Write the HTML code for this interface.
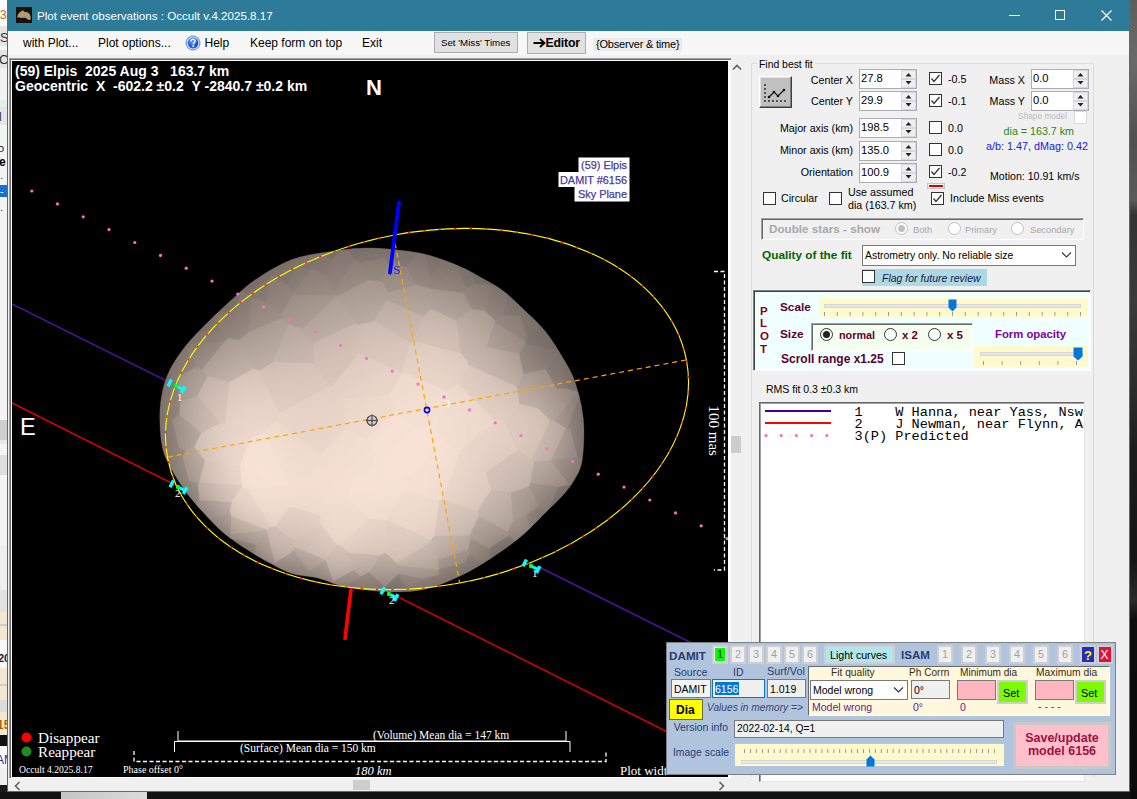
<!DOCTYPE html>
<html><head><meta charset="utf-8">
<style>
html,body{margin:0;padding:0;}
body{width:1137px;height:799px;overflow:hidden;position:relative;background:#1c1c1c;font-family:"Liberation Sans",sans-serif;font-size:12px;color:#000;}
.a{position:absolute;white-space:nowrap;}
.t{position:absolute;white-space:nowrap;line-height:1;}
.box{position:absolute;box-sizing:border-box;}
.btn{position:absolute;box-sizing:border-box;background:#e1e1e1;border:1px solid #adadad;}
</style></head><body>
<div class="box" style="left:0px;top:0px;width:8px;height:792px;background:#f4f4f4;"></div>
<div class="box" style="left:0px;top:0px;width:8px;height:26px;background:#fbfbfb;"></div>
<div class="t" style="left:0px;top:8.84px;font-size:12px;color:#d06010;letter-spacing:-1px;">3.</div>
<div class="box" style="left:0px;top:26px;width:8px;height:20px;background:#e4e4e4;"></div>
<div class="t" style="left:0px;top:31.00px;font-size:13px;color:#333;">S</div>
<div class="box" style="left:0px;top:46px;width:8px;height:4px;background:#f4f4f4;"></div>
<div class="box" style="left:0px;top:50px;width:8px;height:18px;background:#e4e4e4;"></div>
<div class="t" style="left:-1px;top:53.00px;font-size:13px;color:#333;">C</div>
<div class="box" style="left:0px;top:68px;width:8px;height:32px;background:#f2f2f2;"></div>
<div class="box" style="left:0px;top:100px;width:8px;height:7px;background:#e4f0e4;"></div>
<div class="box" style="left:0px;top:107px;width:8px;height:18px;background:#e6e6e6;"></div>
<div class="t" style="left:-1px;top:110.84px;font-size:12px;color:#333;">l</div>
<div class="box" style="left:0px;top:125px;width:8px;height:14px;background:#f2f6f0;"></div>
<div class="t" style="left:-2px;top:142.69px;font-size:11px;color:#222;">o</div>
<div class="t" style="left:-1px;top:155.84px;font-size:12px;color:#000;font-weight:bold;">e</div>
<div class="t" style="left:0px;top:169.69px;font-size:11px;color:#333;">.</div>
<div class="box" style="left:0px;top:185px;width:8px;height:12px;background:#1a6fd0;"></div>
<div class="t" style="left:0px;top:185.69px;font-size:11px;color:#fff;">-</div>
<div class="t" style="left:0px;top:201.69px;font-size:11px;color:#333;">.</div>
<div class="box" style="left:0px;top:212px;width:8px;height:268px;background:#f4f4f4;"></div>
<div class="box" style="left:0px;top:420px;width:8px;height:20px;background:#cfcfcf;"></div>
<div class="box" style="left:0px;top:440px;width:8px;height:4px;background:#e8e8e8;"></div>
<div class="box" style="left:0px;top:455px;width:8px;height:20px;background:#e0e0e0;"></div>
<div class="box" style="left:0px;top:545px;width:8px;height:45px;background:#eeeeee;"></div>
<div class="box" style="left:0px;top:590px;width:8px;height:22px;background:#e2e2e2;"></div>
<div class="box" style="left:0px;top:612px;width:8px;height:28px;background:#f2ead0;"></div>
<div class="box" style="left:0px;top:624px;width:8px;height:2px;background:#cfcfcf;"></div>
<div class="box" style="left:0px;top:640px;width:8px;height:28px;background:#f8f8f8;"></div>
<div class="t" style="left:-2px;top:652.69px;font-size:11px;color:#222;font-weight:bold;">20</div>
<div class="box" style="left:0px;top:668px;width:8px;height:32px;background:#f2ead0;"></div>
<div class="box" style="left:0px;top:684px;width:8px;height:2px;background:#cfcfcf;"></div>
<div class="box" style="left:0px;top:700px;width:8px;height:12px;background:#dcdcdc;"></div>
<div class="box" style="left:0px;top:712px;width:8px;height:23px;background:#f2ead0;"></div>
<div class="t" style="left:-3px;top:718.84px;font-size:12px;color:#b06000;font-weight:bold;">15</div>
<div class="box" style="left:0px;top:735px;width:8px;height:11px;background:#111;"></div>
<div class="box" style="left:0px;top:746px;width:8px;height:22px;background:#f8f8f8;"></div>
<div class="t" style="left:-4px;top:753.84px;font-size:12px;color:#3a2aa0;">AM</div>
<div class="box" style="left:0px;top:768px;width:8px;height:17px;background:#f0f0f0;"></div>
<div class="box" style="left:0px;top:785px;width:8px;height:7px;background:#1a1a1a;"></div>
<div class="box" style="left:0px;top:792px;width:1137px;height:7px;background:#121212;"></div>
<div class="box" style="left:61px;top:792px;width:86px;height:7px;background:linear-gradient(90deg,#c4c4c4,#dcdcdc);"></div>
<div class="box" style="left:1130px;top:0px;width:7px;height:799px;background:linear-gradient(180deg,#5e5e5e 0,#6a6a6a 60px,#505050 140px,#5a5a5a 200px,#333 215px,#3a3a3a 300px,#2a2a2a 400px,#1c1c1c 450px,#151515 560px,#2a2a2a 600px,#0c0c0c 620px,#0a0a0a 799px);"></div>
<div class="box" style="left:7px;top:0px;width:1123px;height:792px;background:#f0f0f0;border:1px solid #2d7b99;border-top:none;"></div>
<div class="box" style="left:7px;top:0px;width:1123px;height:31px;background:#2d7b99;"></div>
<div class="box" style="left:16px;top:7px;width:16px;height:16px;background:#15120e;"></div>
<svg class="a" style="left:16px;top:7px;" width="16" height="16"><path d="M1.2 9.4C2 7 3.5 5 5.5 4C7 3 7.8 3.4 8.2 4.8C9.5 5 11.5 5 12.5 6C14 7 14.8 9 14.7 11.5C14.6 13 13.5 13.5 12.5 12.8C11 11.8 9.5 10.6 8.5 10.8C6 11 3 11 1.6 10.6Z" fill="#b59a70"/></svg>
<div class="t" style="left:37px;top:10.38px;font-size:11.6px;color:#fff;">Plot event observations : Occult v.4.2025.8.17</div>
<div class="box" style="left:1009px;top:15px;width:11px;height:1px;background:#fff;"></div>
<div class="box" style="left:1055px;top:10px;width:10px;height:10px;border:1px solid #fff;"></div>
<svg class="a" style="left:1101px;top:10px;" width="11" height="11"><path d="M0.5 0.5L10.5 10.5M10.5 0.5L0.5 10.5" stroke="#fff" stroke-width="1.15"/></svg>
<div class="box" style="left:8px;top:31px;width:1121px;height:24px;background:#f7f7f7;"></div>
<div class="t" style="left:23px;top:36.64px;font-size:12px;color:#000;">with Plot...</div>
<div class="t" style="left:98px;top:36.64px;font-size:12px;color:#000;">Plot options...</div>
<svg class="a" style="left:185px;top:35px;" width="16" height="16"><defs><radialGradient id="hg" cx="0.4" cy="0.35" r="0.7"><stop offset="0" stop-color="#5a9cff"/><stop offset="1" stop-color="#0a3cc0"/></radialGradient></defs><circle cx="8" cy="8" r="7" fill="#dfe8f8" stroke="#4a78d0" stroke-width="0.9"/><circle cx="8" cy="8" r="5.4" fill="url(#hg)"/><path d="M6 6.3C6 4.9 7 4.3 8.1 4.3C9.3 4.3 10.1 5.1 10.1 6.1C10.1 7.3 8.6 7.6 8.4 8.8V9.4" fill="none" stroke="#fff" stroke-width="1.5"/><circle cx="8.3" cy="11.3" r="0.95" fill="#fff"/></svg>
<div class="t" style="left:204.5px;top:36.64px;font-size:12px;color:#000;">Help</div>
<div class="t" style="left:250px;top:36.64px;font-size:12px;color:#000;">Keep form on top</div>
<div class="t" style="left:362px;top:36.64px;font-size:12px;color:#000;">Exit</div>
<div class="box" style="left:434px;top:32px;width:84px;height:21px;background:#e1e1e1;border:1px solid #adadad;"></div>
<div class="t" style="left:441px;top:37.99px;font-size:9.7px;color:#000;">Set 'Miss' Times</div>
<div class="box" style="left:527px;top:32px;width:59px;height:22px;background:#e1e1e1;border:1px solid #adadad;"></div>
<svg class="a" style="left:533px;top:37px;" width="14" height="12"><path d="M0.5 6H11M7 2L11.5 6L7 10" fill="none" stroke="#000" stroke-width="1.8"/></svg>
<div class="t" style="left:545.5px;top:37.39px;font-size:12.3px;color:#000;font-weight:bold;letter-spacing:-0.2px;">Editor</div>
<div class="box" style="left:593px;top:38px;width:89px;height:13px;background:#ebebeb;"></div>
<div class="t" style="left:596px;top:39.19px;font-size:11px;color:#000;letter-spacing:-0.2px;">{Observer &amp; time}</div>
<div class="box" style="left:9px;top:58px;width:722px;height:720px;background:#fff;border-left:1px solid #a0a0a0;border-top:1px solid #a0a0a0;"></div>
<div class="box" style="left:10px;top:59px;width:721px;height:719px;background:#fff;border-left:1px solid #696969;border-top:1px solid #696969;"></div>
<svg class="a" style="left:12px;top:61px;" width="716" height="716" viewBox="12 61 716 716">
<rect x="12" y="61" width="716" height="716" fill="#000"/>
<line x1="12" y1="304" x2="175" y2="385.2" stroke="#5510a0" stroke-width="1.4"/>
<line x1="537" y1="566" x2="728" y2="661" stroke="#5510a0" stroke-width="1.4"/>
<line x1="12" y1="403" x2="178" y2="486.3" stroke="#e80000" stroke-width="1.4"/>
<line x1="392" y1="593.8" x2="728" y2="762.4" stroke="#e80000" stroke-width="1.4"/>
<defs><clipPath id="astclip"><path d="M160.0 425.0 L159.9 420.0 L159.8 415.0 L160.0 410.0 L160.4 405.0 L161.0 400.0 L161.8 395.0 L162.8 390.0 L164.0 385.0 L165.6 380.0 L167.5 375.0 L169.8 370.0 L172.5 365.0 L175.6 360.0 L178.9 355.0 L182.5 350.0 L186.4 345.0 L190.7 340.0 L195.3 335.1 L200.1 330.1 L205.0 325.0 L210.3 319.8 L215.9 314.3 L221.6 308.9 L227.2 303.8 L232.5 299.0 L237.1 294.8 L241.2 291.0 L245.2 287.4 L249.7 283.8 L255.0 280.0 L261.4 275.8 L268.5 271.3 L276.1 266.9 L284.0 262.9 L292.0 259.5 L300.2 256.9 L308.9 255.0 L317.7 253.4 L326.2 252.2 L334.0 251.0 L341.0 250.0 L347.5 249.2 L353.7 248.6 L359.8 248.2 L366.0 248.0 L372.4 248.0 L378.8 248.3 L385.3 248.7 L391.7 249.3 L398.0 250.0 L404.2 250.7 L410.4 251.6 L416.6 252.6 L422.8 253.8 L429.0 255.3 L435.5 257.2 L442.3 259.6 L449.0 262.1 L455.4 264.6 L461.0 267.0 L465.7 269.1 L469.8 271.2 L473.5 273.2 L477.1 275.3 L481.0 277.5 L485.2 279.8 L489.5 282.2 L493.9 284.7 L498.3 287.4 L502.6 290.4 L506.9 293.8 L511.1 297.5 L515.3 301.5 L519.6 305.5 L523.8 309.6 L528.1 313.7 L532.5 317.8 L536.8 322.0 L541.0 326.4 L545.0 331.0 L548.7 335.8 L552.3 340.9 L555.7 346.0 L558.9 351.2 L562.0 356.4 L564.9 361.3 L567.7 366.0 L570.3 370.9 L572.8 376.1 L575.0 382.0 L577.1 388.8 L579.2 396.2 L581.0 404.1 L582.4 412.1 L583.4 420.0 L583.9 428.2 L583.9 436.8 L583.6 445.3 L583.0 453.2 L582.2 460.0 L581.1 465.3 L579.7 469.6 L578.0 473.2 L576.2 476.6 L574.2 480.0 L572.1 483.5 L569.9 486.7 L567.5 489.8 L564.9 492.9 L562.2 496.0 L559.3 499.1 L556.2 502.2 L553.0 505.3 L549.6 508.5 L546.1 512.0 L542.3 515.8 L538.3 519.9 L534.2 524.1 L530.1 528.2 L526.0 532.0 L522.1 535.5 L518.2 538.7 L514.3 541.8 L510.3 544.9 L506.0 548.0 L501.4 551.3 L496.6 554.6 L491.6 557.9 L486.7 561.1 L482.0 564.0 L477.6 566.7 L473.4 569.1 L469.3 571.4 L464.9 573.7 L460.0 576.0 L454.5 578.5 L448.4 581.2 L442.1 583.8 L435.9 586.1 L430.0 588.0 L424.6 589.3 L419.5 590.3 L414.4 590.9 L409.3 591.4 L403.8 591.7 L397.9 591.9 L391.8 591.9 L385.6 591.7 L379.2 591.3 L373.0 590.8 L366.7 590.1 L360.3 589.3 L353.9 588.3 L347.8 587.2 L342.0 586.0 L336.8 584.5 L332.0 582.9 L327.4 581.1 L322.8 579.4 L318.0 578.0 L312.9 577.0 L307.6 576.3 L302.4 575.6 L297.1 574.8 L292.0 573.5 L287.1 571.7 L282.3 569.6 L277.6 567.2 L272.8 564.6 L268.0 562.0 L263.0 559.2 L257.9 556.3 L252.8 553.2 L247.8 550.1 L243.0 547.0 L238.5 544.0 L234.3 541.1 L230.1 538.1 L226.1 534.9 L222.0 531.5 L217.9 527.7 L213.7 523.6 L209.7 519.3 L205.7 515.1 L202.0 511.0 L198.5 507.2 L195.2 503.4 L192.1 499.7 L189.0 496.0 L186.0 492.0 L183.0 487.8 L180.0 483.3 L177.1 478.8 L174.4 474.3 L172.0 470.0 L169.8 466.0 L167.8 462.1 L165.9 458.3 L164.3 454.3 L163.0 450.0 L162.0 445.3 L161.2 440.4 L160.6 435.2 L160.2 430.1Z"/></clipPath><filter id="blur" x="-5%" y="-5%" width="110%" height="110%"><feGaussianBlur stdDeviation="7"/></filter></defs><g clip-path="url(#astclip)"><g filter="url(#blur)"><rect x="148" y="236" width="12" height="12" fill="#645c56"/><rect x="160" y="236" width="12" height="12" fill="#645c56"/><rect x="172" y="236" width="12" height="12" fill="#645c56"/><rect x="184" y="236" width="12" height="12" fill="#645c56"/><rect x="196" y="236" width="12" height="12" fill="#645c56"/><rect x="208" y="236" width="12" height="12" fill="#645c56"/><rect x="220" y="236" width="12" height="12" fill="#645c56"/><rect x="232" y="236" width="12" height="12" fill="#645c56"/><rect x="244" y="236" width="12" height="12" fill="#645c56"/><rect x="256" y="236" width="12" height="12" fill="#645c56"/><rect x="268" y="236" width="12" height="12" fill="#645c56"/><rect x="280" y="236" width="12" height="12" fill="#655c57"/><rect x="292" y="236" width="12" height="12" fill="#685f5a"/><rect x="304" y="236" width="12" height="12" fill="#6b625c"/><rect x="316" y="236" width="12" height="12" fill="#6c635d"/><rect x="328" y="236" width="12" height="12" fill="#6e645f"/><rect x="340" y="236" width="12" height="12" fill="#6f655f"/><rect x="352" y="236" width="12" height="12" fill="#6f6660"/><rect x="364" y="236" width="12" height="12" fill="#706660"/><rect x="376" y="236" width="12" height="12" fill="#6f6660"/><rect x="388" y="236" width="12" height="12" fill="#6e655f"/><rect x="400" y="236" width="12" height="12" fill="#6c635d"/><rect x="412" y="236" width="12" height="12" fill="#6a615b"/><rect x="424" y="236" width="12" height="12" fill="#675f59"/><rect x="436" y="236" width="12" height="12" fill="#645c56"/><rect x="448" y="236" width="12" height="12" fill="#645c56"/><rect x="460" y="236" width="12" height="12" fill="#645c56"/><rect x="472" y="236" width="12" height="12" fill="#645c56"/><rect x="484" y="236" width="12" height="12" fill="#645c56"/><rect x="496" y="236" width="12" height="12" fill="#645c56"/><rect x="508" y="236" width="12" height="12" fill="#645c56"/><rect x="520" y="236" width="12" height="12" fill="#645c56"/><rect x="532" y="236" width="12" height="12" fill="#645c56"/><rect x="544" y="236" width="12" height="12" fill="#645c56"/><rect x="556" y="236" width="12" height="12" fill="#645c56"/><rect x="568" y="236" width="12" height="12" fill="#645c56"/><rect x="580" y="236" width="12" height="12" fill="#645c56"/><rect x="592" y="236" width="12" height="12" fill="#645c56"/><rect x="148" y="248" width="12" height="12" fill="#645c56"/><rect x="160" y="248" width="12" height="12" fill="#645c56"/><rect x="172" y="248" width="12" height="12" fill="#645c56"/><rect x="184" y="248" width="12" height="12" fill="#645c56"/><rect x="196" y="248" width="12" height="12" fill="#645c56"/><rect x="208" y="248" width="12" height="12" fill="#645c56"/><rect x="220" y="248" width="12" height="12" fill="#645c56"/><rect x="232" y="248" width="12" height="12" fill="#645c56"/><rect x="244" y="248" width="12" height="12" fill="#645c56"/><rect x="256" y="248" width="12" height="12" fill="#655d57"/><rect x="268" y="248" width="12" height="12" fill="#6b625c"/><rect x="280" y="248" width="12" height="12" fill="#6f6660"/><rect x="292" y="248" width="12" height="12" fill="#736963"/><rect x="304" y="248" width="12" height="12" fill="#756b65"/><rect x="316" y="248" width="12" height="12" fill="#776d67"/><rect x="328" y="248" width="12" height="12" fill="#796f68"/><rect x="340" y="248" width="12" height="12" fill="#7b706a"/><rect x="352" y="248" width="12" height="12" fill="#7c716b"/><rect x="364" y="248" width="12" height="12" fill="#7d726c"/><rect x="376" y="248" width="12" height="12" fill="#7d736c"/><rect x="388" y="248" width="12" height="12" fill="#7c716b"/><rect x="400" y="248" width="12" height="12" fill="#7a6f69"/><rect x="412" y="248" width="12" height="12" fill="#776d67"/><rect x="424" y="248" width="12" height="12" fill="#746a64"/><rect x="436" y="248" width="12" height="12" fill="#706761"/><rect x="448" y="248" width="12" height="12" fill="#6b625d"/><rect x="460" y="248" width="12" height="12" fill="#665e58"/><rect x="472" y="248" width="12" height="12" fill="#645c56"/><rect x="484" y="248" width="12" height="12" fill="#645c56"/><rect x="496" y="248" width="12" height="12" fill="#645c56"/><rect x="508" y="248" width="12" height="12" fill="#645c56"/><rect x="520" y="248" width="12" height="12" fill="#645c56"/><rect x="532" y="248" width="12" height="12" fill="#645c56"/><rect x="544" y="248" width="12" height="12" fill="#645c56"/><rect x="556" y="248" width="12" height="12" fill="#645c56"/><rect x="568" y="248" width="12" height="12" fill="#645c56"/><rect x="580" y="248" width="12" height="12" fill="#645c56"/><rect x="592" y="248" width="12" height="12" fill="#645c56"/><rect x="148" y="260" width="12" height="12" fill="#645c56"/><rect x="160" y="260" width="12" height="12" fill="#645c56"/><rect x="172" y="260" width="12" height="12" fill="#645c56"/><rect x="184" y="260" width="12" height="12" fill="#645c56"/><rect x="196" y="260" width="12" height="12" fill="#645c56"/><rect x="208" y="260" width="12" height="12" fill="#645c56"/><rect x="220" y="260" width="12" height="12" fill="#645c56"/><rect x="232" y="260" width="12" height="12" fill="#645c56"/><rect x="244" y="260" width="12" height="12" fill="#685f5a"/><rect x="256" y="260" width="12" height="12" fill="#6f6560"/><rect x="268" y="260" width="12" height="12" fill="#746b64"/><rect x="280" y="260" width="12" height="12" fill="#796f68"/><rect x="292" y="260" width="12" height="12" fill="#7d726c"/><rect x="304" y="260" width="12" height="12" fill="#80756e"/><rect x="316" y="260" width="12" height="12" fill="#837871"/><rect x="328" y="260" width="12" height="12" fill="#857a73"/><rect x="340" y="260" width="12" height="12" fill="#877c74"/><rect x="352" y="260" width="12" height="12" fill="#897d76"/><rect x="364" y="260" width="12" height="12" fill="#8b7f77"/><rect x="376" y="260" width="12" height="12" fill="#8c8078"/><rect x="388" y="260" width="12" height="12" fill="#8a7f77"/><rect x="400" y="260" width="12" height="12" fill="#887d75"/><rect x="412" y="260" width="12" height="12" fill="#867a73"/><rect x="424" y="260" width="12" height="12" fill="#827770"/><rect x="436" y="260" width="12" height="12" fill="#7e736c"/><rect x="448" y="260" width="12" height="12" fill="#786e68"/><rect x="460" y="260" width="12" height="12" fill="#726963"/><rect x="472" y="260" width="12" height="12" fill="#6c635d"/><rect x="484" y="260" width="12" height="12" fill="#665d58"/><rect x="496" y="260" width="12" height="12" fill="#645c56"/><rect x="508" y="260" width="12" height="12" fill="#645c56"/><rect x="520" y="260" width="12" height="12" fill="#645c56"/><rect x="532" y="260" width="12" height="12" fill="#645c56"/><rect x="544" y="260" width="12" height="12" fill="#645c56"/><rect x="556" y="260" width="12" height="12" fill="#645c56"/><rect x="568" y="260" width="12" height="12" fill="#645c56"/><rect x="580" y="260" width="12" height="12" fill="#645c56"/><rect x="592" y="260" width="12" height="12" fill="#645c56"/><rect x="148" y="272" width="12" height="12" fill="#645c56"/><rect x="160" y="272" width="12" height="12" fill="#645c56"/><rect x="172" y="272" width="12" height="12" fill="#645c56"/><rect x="184" y="272" width="12" height="12" fill="#645c56"/><rect x="196" y="272" width="12" height="12" fill="#645c56"/><rect x="208" y="272" width="12" height="12" fill="#645c56"/><rect x="220" y="272" width="12" height="12" fill="#645c56"/><rect x="232" y="272" width="12" height="12" fill="#6a615b"/><rect x="244" y="272" width="12" height="12" fill="#726862"/><rect x="256" y="272" width="12" height="12" fill="#786e68"/><rect x="268" y="272" width="12" height="12" fill="#7e736d"/><rect x="280" y="272" width="12" height="12" fill="#837871"/><rect x="292" y="272" width="12" height="12" fill="#877c75"/><rect x="304" y="272" width="12" height="12" fill="#8b7f78"/><rect x="316" y="272" width="12" height="12" fill="#8e827a"/><rect x="328" y="272" width="12" height="12" fill="#91857d"/><rect x="340" y="272" width="12" height="12" fill="#93877f"/><rect x="352" y="272" width="12" height="12" fill="#968981"/><rect x="364" y="272" width="12" height="12" fill="#988b83"/><rect x="376" y="272" width="12" height="12" fill="#998c84"/><rect x="388" y="272" width="12" height="12" fill="#988b83"/><rect x="400" y="272" width="12" height="12" fill="#978a82"/><rect x="412" y="272" width="12" height="12" fill="#948880"/><rect x="424" y="272" width="12" height="12" fill="#91857d"/><rect x="436" y="272" width="12" height="12" fill="#8c8079"/><rect x="448" y="272" width="12" height="12" fill="#877b74"/><rect x="460" y="272" width="12" height="12" fill="#80756e"/><rect x="472" y="272" width="12" height="12" fill="#796f68"/><rect x="484" y="272" width="12" height="12" fill="#716862"/><rect x="496" y="272" width="12" height="12" fill="#6a615b"/><rect x="508" y="272" width="12" height="12" fill="#645c56"/><rect x="520" y="272" width="12" height="12" fill="#645c56"/><rect x="532" y="272" width="12" height="12" fill="#645c56"/><rect x="544" y="272" width="12" height="12" fill="#645c56"/><rect x="556" y="272" width="12" height="12" fill="#645c56"/><rect x="568" y="272" width="12" height="12" fill="#645c56"/><rect x="580" y="272" width="12" height="12" fill="#645c56"/><rect x="592" y="272" width="12" height="12" fill="#645c56"/><rect x="148" y="284" width="12" height="12" fill="#645c56"/><rect x="160" y="284" width="12" height="12" fill="#645c56"/><rect x="172" y="284" width="12" height="12" fill="#645c56"/><rect x="184" y="284" width="12" height="12" fill="#645c56"/><rect x="196" y="284" width="12" height="12" fill="#645c56"/><rect x="208" y="284" width="12" height="12" fill="#645c56"/><rect x="220" y="284" width="12" height="12" fill="#6a615b"/><rect x="232" y="284" width="12" height="12" fill="#736963"/><rect x="244" y="284" width="12" height="12" fill="#7b706a"/><rect x="256" y="284" width="12" height="12" fill="#827770"/><rect x="268" y="284" width="12" height="12" fill="#887c75"/><rect x="280" y="284" width="12" height="12" fill="#8d817a"/><rect x="292" y="284" width="12" height="12" fill="#92857e"/><rect x="304" y="284" width="12" height="12" fill="#968981"/><rect x="316" y="284" width="12" height="12" fill="#998c84"/><rect x="328" y="284" width="12" height="12" fill="#9c8f87"/><rect x="340" y="284" width="12" height="12" fill="#9f9289"/><rect x="352" y="284" width="12" height="12" fill="#a2948c"/><rect x="364" y="284" width="12" height="12" fill="#a4968d"/><rect x="376" y="284" width="12" height="12" fill="#a5978f"/><rect x="388" y="284" width="12" height="12" fill="#a6988f"/><rect x="400" y="284" width="12" height="12" fill="#a5978e"/><rect x="412" y="284" width="12" height="12" fill="#a3958d"/><rect x="424" y="284" width="12" height="12" fill="#a0938a"/><rect x="436" y="284" width="12" height="12" fill="#9c8f86"/><rect x="448" y="284" width="12" height="12" fill="#968981"/><rect x="460" y="284" width="12" height="12" fill="#8f837b"/><rect x="472" y="284" width="12" height="12" fill="#877b74"/><rect x="484" y="284" width="12" height="12" fill="#7e736d"/><rect x="496" y="284" width="12" height="12" fill="#756b65"/><rect x="508" y="284" width="12" height="12" fill="#6d645e"/><rect x="520" y="284" width="12" height="12" fill="#665d58"/><rect x="532" y="284" width="12" height="12" fill="#645c56"/><rect x="544" y="284" width="12" height="12" fill="#645c56"/><rect x="556" y="284" width="12" height="12" fill="#645c56"/><rect x="568" y="284" width="12" height="12" fill="#645c56"/><rect x="580" y="284" width="12" height="12" fill="#645c56"/><rect x="592" y="284" width="12" height="12" fill="#645c56"/><rect x="148" y="296" width="12" height="12" fill="#645c56"/><rect x="160" y="296" width="12" height="12" fill="#645c56"/><rect x="172" y="296" width="12" height="12" fill="#645c56"/><rect x="184" y="296" width="12" height="12" fill="#645c56"/><rect x="196" y="296" width="12" height="12" fill="#645c56"/><rect x="208" y="296" width="12" height="12" fill="#6a615b"/><rect x="220" y="296" width="12" height="12" fill="#746a64"/><rect x="232" y="296" width="12" height="12" fill="#7c726b"/><rect x="244" y="296" width="12" height="12" fill="#847972"/><rect x="256" y="296" width="12" height="12" fill="#8b7f78"/><rect x="268" y="296" width="12" height="12" fill="#92857e"/><rect x="280" y="296" width="12" height="12" fill="#978a82"/><rect x="292" y="296" width="12" height="12" fill="#9c8f86"/><rect x="304" y="296" width="12" height="12" fill="#a0938a"/><rect x="316" y="296" width="12" height="12" fill="#a4968d"/><rect x="328" y="296" width="12" height="12" fill="#a79990"/><rect x="340" y="296" width="12" height="12" fill="#ab9c93"/><rect x="352" y="296" width="12" height="12" fill="#ad9f96"/><rect x="364" y="296" width="12" height="12" fill="#b0a198"/><rect x="376" y="296" width="12" height="12" fill="#b2a399"/><rect x="388" y="296" width="12" height="12" fill="#b3a39a"/><rect x="400" y="296" width="12" height="12" fill="#b3a39a"/><rect x="412" y="296" width="12" height="12" fill="#b2a299"/><rect x="424" y="296" width="12" height="12" fill="#afa097"/><rect x="436" y="296" width="12" height="12" fill="#ab9d94"/><rect x="448" y="296" width="12" height="12" fill="#a6988f"/><rect x="460" y="296" width="12" height="12" fill="#9e9188"/><rect x="472" y="296" width="12" height="12" fill="#958880"/><rect x="484" y="296" width="12" height="12" fill="#8b8078"/><rect x="496" y="296" width="12" height="12" fill="#827670"/><rect x="508" y="296" width="12" height="12" fill="#786e67"/><rect x="520" y="296" width="12" height="12" fill="#706660"/><rect x="532" y="296" width="12" height="12" fill="#685f5a"/><rect x="544" y="296" width="12" height="12" fill="#645c56"/><rect x="556" y="296" width="12" height="12" fill="#645c56"/><rect x="568" y="296" width="12" height="12" fill="#645c56"/><rect x="580" y="296" width="12" height="12" fill="#645c56"/><rect x="592" y="296" width="12" height="12" fill="#645c56"/><rect x="148" y="308" width="12" height="12" fill="#645c56"/><rect x="160" y="308" width="12" height="12" fill="#645c56"/><rect x="172" y="308" width="12" height="12" fill="#645c56"/><rect x="184" y="308" width="12" height="12" fill="#645c56"/><rect x="196" y="308" width="12" height="12" fill="#69605b"/><rect x="208" y="308" width="12" height="12" fill="#746a64"/><rect x="220" y="308" width="12" height="12" fill="#7e736d"/><rect x="232" y="308" width="12" height="12" fill="#877c74"/><rect x="244" y="308" width="12" height="12" fill="#8f837b"/><rect x="256" y="308" width="12" height="12" fill="#968981"/><rect x="268" y="308" width="12" height="12" fill="#9c8f87"/><rect x="280" y="308" width="12" height="12" fill="#a1948b"/><rect x="292" y="308" width="12" height="12" fill="#a6988f"/><rect x="304" y="308" width="12" height="12" fill="#aa9c93"/><rect x="316" y="308" width="12" height="12" fill="#aea096"/><rect x="328" y="308" width="12" height="12" fill="#b2a399"/><rect x="340" y="308" width="12" height="12" fill="#b5a69c"/><rect x="352" y="308" width="12" height="12" fill="#b8a99f"/><rect x="364" y="308" width="12" height="12" fill="#bbaba1"/><rect x="376" y="308" width="12" height="12" fill="#bdada3"/><rect x="388" y="308" width="12" height="12" fill="#bfaea4"/><rect x="400" y="308" width="12" height="12" fill="#bfafa5"/><rect x="412" y="308" width="12" height="12" fill="#bfafa5"/><rect x="424" y="308" width="12" height="12" fill="#beaea4"/><rect x="436" y="308" width="12" height="12" fill="#bbaba1"/><rect x="448" y="308" width="12" height="12" fill="#b5a69c"/><rect x="460" y="308" width="12" height="12" fill="#ad9e95"/><rect x="472" y="308" width="12" height="12" fill="#a3968d"/><rect x="484" y="308" width="12" height="12" fill="#998c84"/><rect x="496" y="308" width="12" height="12" fill="#8e827b"/><rect x="508" y="308" width="12" height="12" fill="#847972"/><rect x="520" y="308" width="12" height="12" fill="#7a7069"/><rect x="532" y="308" width="12" height="12" fill="#716761"/><rect x="544" y="308" width="12" height="12" fill="#685f5a"/><rect x="556" y="308" width="12" height="12" fill="#645c56"/><rect x="568" y="308" width="12" height="12" fill="#645c56"/><rect x="580" y="308" width="12" height="12" fill="#645c56"/><rect x="592" y="308" width="12" height="12" fill="#645c56"/><rect x="148" y="320" width="12" height="12" fill="#645c56"/><rect x="160" y="320" width="12" height="12" fill="#645c56"/><rect x="172" y="320" width="12" height="12" fill="#645c56"/><rect x="184" y="320" width="12" height="12" fill="#685f59"/><rect x="196" y="320" width="12" height="12" fill="#746a64"/><rect x="208" y="320" width="12" height="12" fill="#80756e"/><rect x="220" y="320" width="12" height="12" fill="#8a7e77"/><rect x="232" y="320" width="12" height="12" fill="#93867f"/><rect x="244" y="320" width="12" height="12" fill="#9b8d85"/><rect x="256" y="320" width="12" height="12" fill="#a1938b"/><rect x="268" y="320" width="12" height="12" fill="#a79990"/><rect x="280" y="320" width="12" height="12" fill="#ac9d94"/><rect x="292" y="320" width="12" height="12" fill="#b0a198"/><rect x="304" y="320" width="12" height="12" fill="#b4a59c"/><rect x="316" y="320" width="12" height="12" fill="#b8a99f"/><rect x="328" y="320" width="12" height="12" fill="#bcaca2"/><rect x="340" y="320" width="12" height="12" fill="#bfafa5"/><rect x="352" y="320" width="12" height="12" fill="#c2b2a7"/><rect x="364" y="320" width="12" height="12" fill="#c5b4aa"/><rect x="376" y="320" width="12" height="12" fill="#c7b6ac"/><rect x="388" y="320" width="12" height="12" fill="#c9b8ae"/><rect x="400" y="320" width="12" height="12" fill="#cbb9af"/><rect x="412" y="320" width="12" height="12" fill="#cbbaaf"/><rect x="424" y="320" width="12" height="12" fill="#cbbaaf"/><rect x="436" y="320" width="12" height="12" fill="#c9b8ad"/><rect x="448" y="320" width="12" height="12" fill="#c4b3a9"/><rect x="460" y="320" width="12" height="12" fill="#bbaba1"/><rect x="472" y="320" width="12" height="12" fill="#b1a298"/><rect x="484" y="320" width="12" height="12" fill="#a6978f"/><rect x="496" y="320" width="12" height="12" fill="#9a8d85"/><rect x="508" y="320" width="12" height="12" fill="#8e827b"/><rect x="520" y="320" width="12" height="12" fill="#827770"/><rect x="532" y="320" width="12" height="12" fill="#776d67"/><rect x="544" y="320" width="12" height="12" fill="#6e645f"/><rect x="556" y="320" width="12" height="12" fill="#675e58"/><rect x="568" y="320" width="12" height="12" fill="#645c56"/><rect x="580" y="320" width="12" height="12" fill="#645c56"/><rect x="592" y="320" width="12" height="12" fill="#645c56"/><rect x="148" y="332" width="12" height="12" fill="#645c56"/><rect x="160" y="332" width="12" height="12" fill="#645c56"/><rect x="172" y="332" width="12" height="12" fill="#645c57"/><rect x="184" y="332" width="12" height="12" fill="#736963"/><rect x="196" y="332" width="12" height="12" fill="#81766f"/><rect x="208" y="332" width="12" height="12" fill="#8d817a"/><rect x="220" y="332" width="12" height="12" fill="#978b83"/><rect x="232" y="332" width="12" height="12" fill="#a0928a"/><rect x="244" y="332" width="12" height="12" fill="#a79990"/><rect x="256" y="332" width="12" height="12" fill="#ad9e95"/><rect x="268" y="332" width="12" height="12" fill="#b2a399"/><rect x="280" y="332" width="12" height="12" fill="#b6a79d"/><rect x="292" y="332" width="12" height="12" fill="#baaba1"/><rect x="304" y="332" width="12" height="12" fill="#beaea4"/><rect x="316" y="332" width="12" height="12" fill="#c2b1a7"/><rect x="328" y="332" width="12" height="12" fill="#c5b4aa"/><rect x="340" y="332" width="12" height="12" fill="#c8b7ad"/><rect x="352" y="332" width="12" height="12" fill="#cbbaaf"/><rect x="364" y="332" width="12" height="12" fill="#cebdb2"/><rect x="376" y="332" width="12" height="12" fill="#d1bfb4"/><rect x="388" y="332" width="12" height="12" fill="#d3c1b6"/><rect x="400" y="332" width="12" height="12" fill="#d5c2b7"/><rect x="412" y="332" width="12" height="12" fill="#d6c3b8"/><rect x="424" y="332" width="12" height="12" fill="#d5c3b8"/><rect x="436" y="332" width="12" height="12" fill="#d4c2b6"/><rect x="448" y="332" width="12" height="12" fill="#cfbdb2"/><rect x="460" y="332" width="12" height="12" fill="#c7b6ab"/><rect x="472" y="332" width="12" height="12" fill="#bcaca2"/><rect x="484" y="332" width="12" height="12" fill="#b1a298"/><rect x="496" y="332" width="12" height="12" fill="#a4968d"/><rect x="508" y="332" width="12" height="12" fill="#978a82"/><rect x="520" y="332" width="12" height="12" fill="#887d76"/><rect x="532" y="332" width="12" height="12" fill="#7b706a"/><rect x="544" y="332" width="12" height="12" fill="#716761"/><rect x="556" y="332" width="12" height="12" fill="#6c635d"/><rect x="568" y="332" width="12" height="12" fill="#665d58"/><rect x="580" y="332" width="12" height="12" fill="#645c56"/><rect x="592" y="332" width="12" height="12" fill="#645c56"/><rect x="148" y="344" width="12" height="12" fill="#645c56"/><rect x="160" y="344" width="12" height="12" fill="#645c56"/><rect x="172" y="344" width="12" height="12" fill="#706660"/><rect x="184" y="344" width="12" height="12" fill="#80766f"/><rect x="196" y="344" width="12" height="12" fill="#90837c"/><rect x="208" y="344" width="12" height="12" fill="#9c8f86"/><rect x="220" y="344" width="12" height="12" fill="#a6988f"/><rect x="232" y="344" width="12" height="12" fill="#ad9f95"/><rect x="244" y="344" width="12" height="12" fill="#b4a49b"/><rect x="256" y="344" width="12" height="12" fill="#b9a99f"/><rect x="268" y="344" width="12" height="12" fill="#bdada3"/><rect x="280" y="344" width="12" height="12" fill="#c1b0a6"/><rect x="292" y="344" width="12" height="12" fill="#c4b4a9"/><rect x="304" y="344" width="12" height="12" fill="#c7b6ac"/><rect x="316" y="344" width="12" height="12" fill="#cab9ae"/><rect x="328" y="344" width="12" height="12" fill="#cdbcb1"/><rect x="340" y="344" width="12" height="12" fill="#d0bfb4"/><rect x="352" y="344" width="12" height="12" fill="#d3c1b6"/><rect x="364" y="344" width="12" height="12" fill="#d6c4b9"/><rect x="376" y="344" width="12" height="12" fill="#d9c6bb"/><rect x="388" y="344" width="12" height="12" fill="#dbc8bd"/><rect x="400" y="344" width="12" height="12" fill="#ddcabe"/><rect x="412" y="344" width="12" height="12" fill="#decbbf"/><rect x="424" y="344" width="12" height="12" fill="#decbbf"/><rect x="436" y="344" width="12" height="12" fill="#dcc9be"/><rect x="448" y="344" width="12" height="12" fill="#d7c5ba"/><rect x="460" y="344" width="12" height="12" fill="#d0beb3"/><rect x="472" y="344" width="12" height="12" fill="#c6b5ab"/><rect x="484" y="344" width="12" height="12" fill="#bbaba1"/><rect x="496" y="344" width="12" height="12" fill="#ae9f96"/><rect x="508" y="344" width="12" height="12" fill="#9f9289"/><rect x="520" y="344" width="12" height="12" fill="#90837c"/><rect x="532" y="344" width="12" height="12" fill="#80756e"/><rect x="544" y="344" width="12" height="12" fill="#736963"/><rect x="556" y="344" width="12" height="12" fill="#736963"/><rect x="568" y="344" width="12" height="12" fill="#6c625d"/><rect x="580" y="344" width="12" height="12" fill="#645c56"/><rect x="592" y="344" width="12" height="12" fill="#645c56"/><rect x="148" y="356" width="12" height="12" fill="#645c56"/><rect x="160" y="356" width="12" height="12" fill="#6a615b"/><rect x="172" y="356" width="12" height="12" fill="#7d736c"/><rect x="184" y="356" width="12" height="12" fill="#90847c"/><rect x="196" y="356" width="12" height="12" fill="#9f9289"/><rect x="208" y="356" width="12" height="12" fill="#ab9d94"/><rect x="220" y="356" width="12" height="12" fill="#b4a59b"/><rect x="232" y="356" width="12" height="12" fill="#bbaba1"/><rect x="244" y="356" width="12" height="12" fill="#c0b0a6"/><rect x="256" y="356" width="12" height="12" fill="#c4b4a9"/><rect x="268" y="356" width="12" height="12" fill="#c8b7ac"/><rect x="280" y="356" width="12" height="12" fill="#cbb9af"/><rect x="292" y="356" width="12" height="12" fill="#cdbcb1"/><rect x="304" y="356" width="12" height="12" fill="#d0beb3"/><rect x="316" y="356" width="12" height="12" fill="#d2c0b5"/><rect x="328" y="356" width="12" height="12" fill="#d5c3b8"/><rect x="340" y="356" width="12" height="12" fill="#d8c5ba"/><rect x="352" y="356" width="12" height="12" fill="#dac8bc"/><rect x="364" y="356" width="12" height="12" fill="#ddcabf"/><rect x="376" y="356" width="12" height="12" fill="#e0cdc1"/><rect x="388" y="356" width="12" height="12" fill="#e2cfc3"/><rect x="400" y="356" width="12" height="12" fill="#e4d1c4"/><rect x="412" y="356" width="12" height="12" fill="#e5d2c5"/><rect x="424" y="356" width="12" height="12" fill="#e5d1c5"/><rect x="436" y="356" width="12" height="12" fill="#e3d0c3"/><rect x="448" y="356" width="12" height="12" fill="#dfccc0"/><rect x="460" y="356" width="12" height="12" fill="#d8c6ba"/><rect x="472" y="356" width="12" height="12" fill="#cfbeb3"/><rect x="484" y="356" width="12" height="12" fill="#c5b4a9"/><rect x="496" y="356" width="12" height="12" fill="#b8a89f"/><rect x="508" y="356" width="12" height="12" fill="#aa9b92"/><rect x="520" y="356" width="12" height="12" fill="#9a8d85"/><rect x="532" y="356" width="12" height="12" fill="#8a7e77"/><rect x="544" y="356" width="12" height="12" fill="#7d726c"/><rect x="556" y="356" width="12" height="12" fill="#776d67"/><rect x="568" y="356" width="12" height="12" fill="#6f6660"/><rect x="580" y="356" width="12" height="12" fill="#645c56"/><rect x="592" y="356" width="12" height="12" fill="#645c56"/><rect x="148" y="368" width="12" height="12" fill="#645c56"/><rect x="160" y="368" width="12" height="12" fill="#736a63"/><rect x="172" y="368" width="12" height="12" fill="#8a7e77"/><rect x="184" y="368" width="12" height="12" fill="#9f9289"/><rect x="196" y="368" width="12" height="12" fill="#afa097"/><rect x="208" y="368" width="12" height="12" fill="#baaaa0"/><rect x="220" y="368" width="12" height="12" fill="#c2b2a7"/><rect x="232" y="368" width="12" height="12" fill="#c8b7ac"/><rect x="244" y="368" width="12" height="12" fill="#ccbbb0"/><rect x="256" y="368" width="12" height="12" fill="#cfbeb3"/><rect x="268" y="368" width="12" height="12" fill="#d2c0b5"/><rect x="280" y="368" width="12" height="12" fill="#d4c2b6"/><rect x="292" y="368" width="12" height="12" fill="#d5c3b8"/><rect x="304" y="368" width="12" height="12" fill="#d7c5b9"/><rect x="316" y="368" width="12" height="12" fill="#d9c7bb"/><rect x="328" y="368" width="12" height="12" fill="#dbc9bd"/><rect x="340" y="368" width="12" height="12" fill="#decbbf"/><rect x="352" y="368" width="12" height="12" fill="#e0cdc2"/><rect x="364" y="368" width="12" height="12" fill="#e3d0c4"/><rect x="376" y="368" width="12" height="12" fill="#e6d2c6"/><rect x="388" y="368" width="12" height="12" fill="#e8d4c8"/><rect x="400" y="368" width="12" height="12" fill="#ead6c9"/><rect x="412" y="368" width="12" height="12" fill="#ebd7ca"/><rect x="424" y="368" width="12" height="12" fill="#ead6ca"/><rect x="436" y="368" width="12" height="12" fill="#e9d5c8"/><rect x="448" y="368" width="12" height="12" fill="#e5d1c5"/><rect x="460" y="368" width="12" height="12" fill="#dfccc0"/><rect x="472" y="368" width="12" height="12" fill="#d7c5ba"/><rect x="484" y="368" width="12" height="12" fill="#cebdb2"/><rect x="496" y="368" width="12" height="12" fill="#c3b2a8"/><rect x="508" y="368" width="12" height="12" fill="#b6a79d"/><rect x="520" y="368" width="12" height="12" fill="#a89a91"/><rect x="532" y="368" width="12" height="12" fill="#998c84"/><rect x="544" y="368" width="12" height="12" fill="#8c8078"/><rect x="556" y="368" width="12" height="12" fill="#80756e"/><rect x="568" y="368" width="12" height="12" fill="#736a63"/><rect x="580" y="368" width="12" height="12" fill="#665d58"/><rect x="592" y="368" width="12" height="12" fill="#645c56"/><rect x="148" y="380" width="12" height="12" fill="#645c56"/><rect x="160" y="380" width="12" height="12" fill="#7a706a"/><rect x="172" y="380" width="12" height="12" fill="#93877f"/><rect x="184" y="380" width="12" height="12" fill="#aa9c93"/><rect x="196" y="380" width="12" height="12" fill="#baaba1"/><rect x="208" y="380" width="12" height="12" fill="#c6b5ab"/><rect x="220" y="380" width="12" height="12" fill="#cebdb2"/><rect x="232" y="380" width="12" height="12" fill="#d4c2b7"/><rect x="244" y="380" width="12" height="12" fill="#d7c5ba"/><rect x="256" y="380" width="12" height="12" fill="#d9c7bb"/><rect x="268" y="380" width="12" height="12" fill="#dbc8bd"/><rect x="280" y="380" width="12" height="12" fill="#dcc9bd"/><rect x="292" y="380" width="12" height="12" fill="#dccabe"/><rect x="304" y="380" width="12" height="12" fill="#ddcbbf"/><rect x="316" y="380" width="12" height="12" fill="#dfccc0"/><rect x="328" y="380" width="12" height="12" fill="#e1cec2"/><rect x="340" y="380" width="12" height="12" fill="#e3d0c4"/><rect x="352" y="380" width="12" height="12" fill="#e5d2c6"/><rect x="364" y="380" width="12" height="12" fill="#e8d4c8"/><rect x="376" y="380" width="12" height="12" fill="#ebd7ca"/><rect x="388" y="380" width="12" height="12" fill="#edd9cc"/><rect x="400" y="380" width="12" height="12" fill="#eedace"/><rect x="412" y="380" width="12" height="12" fill="#efdbce"/><rect x="424" y="380" width="12" height="12" fill="#efdbce"/><rect x="436" y="380" width="12" height="12" fill="#edd9cd"/><rect x="448" y="380" width="12" height="12" fill="#ead6ca"/><rect x="460" y="380" width="12" height="12" fill="#e5d2c6"/><rect x="472" y="380" width="12" height="12" fill="#dfccc0"/><rect x="484" y="380" width="12" height="12" fill="#d7c5b9"/><rect x="496" y="380" width="12" height="12" fill="#cebdb2"/><rect x="508" y="380" width="12" height="12" fill="#c4b3a9"/><rect x="520" y="380" width="12" height="12" fill="#b8a89e"/><rect x="532" y="380" width="12" height="12" fill="#aa9c93"/><rect x="544" y="380" width="12" height="12" fill="#9c8e86"/><rect x="556" y="380" width="12" height="12" fill="#8b8078"/><rect x="568" y="380" width="12" height="12" fill="#7a6f69"/><rect x="580" y="380" width="12" height="12" fill="#69605a"/><rect x="592" y="380" width="12" height="12" fill="#645c56"/><rect x="148" y="392" width="12" height="12" fill="#69605a"/><rect x="160" y="392" width="12" height="12" fill="#80756e"/><rect x="172" y="392" width="12" height="12" fill="#988b83"/><rect x="184" y="392" width="12" height="12" fill="#afa097"/><rect x="196" y="392" width="12" height="12" fill="#c2b1a7"/><rect x="208" y="392" width="12" height="12" fill="#cfbeb3"/><rect x="220" y="392" width="12" height="12" fill="#d8c6ba"/><rect x="232" y="392" width="12" height="12" fill="#ddcbbf"/><rect x="244" y="392" width="12" height="12" fill="#e1cdc2"/><rect x="256" y="392" width="12" height="12" fill="#e2cfc3"/><rect x="268" y="392" width="12" height="12" fill="#e2cfc3"/><rect x="280" y="392" width="12" height="12" fill="#e2cfc3"/><rect x="292" y="392" width="12" height="12" fill="#e2cfc3"/><rect x="304" y="392" width="12" height="12" fill="#e3cfc3"/><rect x="316" y="392" width="12" height="12" fill="#e4d0c4"/><rect x="328" y="392" width="12" height="12" fill="#e5d2c5"/><rect x="340" y="392" width="12" height="12" fill="#e7d3c7"/><rect x="352" y="392" width="12" height="12" fill="#e9d6c9"/><rect x="364" y="392" width="12" height="12" fill="#ecd8cb"/><rect x="376" y="392" width="12" height="12" fill="#eedacd"/><rect x="388" y="392" width="12" height="12" fill="#f1dccf"/><rect x="400" y="392" width="12" height="12" fill="#f2ded1"/><rect x="412" y="392" width="12" height="12" fill="#f3ded1"/><rect x="424" y="392" width="12" height="12" fill="#f3ded1"/><rect x="436" y="392" width="12" height="12" fill="#f1ddd0"/><rect x="448" y="392" width="12" height="12" fill="#eedacd"/><rect x="460" y="392" width="12" height="12" fill="#ead6ca"/><rect x="472" y="392" width="12" height="12" fill="#e5d2c5"/><rect x="484" y="392" width="12" height="12" fill="#dfccc0"/><rect x="496" y="392" width="12" height="12" fill="#d8c6ba"/><rect x="508" y="392" width="12" height="12" fill="#d0beb3"/><rect x="520" y="392" width="12" height="12" fill="#c7b6ab"/><rect x="532" y="392" width="12" height="12" fill="#bbaba1"/><rect x="544" y="392" width="12" height="12" fill="#ac9d94"/><rect x="556" y="392" width="12" height="12" fill="#988b83"/><rect x="568" y="392" width="12" height="12" fill="#827770"/><rect x="580" y="392" width="12" height="12" fill="#6c635d"/><rect x="592" y="392" width="12" height="12" fill="#645c56"/><rect x="148" y="404" width="12" height="12" fill="#6b625c"/><rect x="160" y="404" width="12" height="12" fill="#827770"/><rect x="172" y="404" width="12" height="12" fill="#9a8d84"/><rect x="184" y="404" width="12" height="12" fill="#b2a399"/><rect x="196" y="404" width="12" height="12" fill="#c7b6ab"/><rect x="208" y="404" width="12" height="12" fill="#d5c3b8"/><rect x="220" y="404" width="12" height="12" fill="#dfccc0"/><rect x="232" y="404" width="12" height="12" fill="#e5d2c5"/><rect x="244" y="404" width="12" height="12" fill="#e8d4c8"/><rect x="256" y="404" width="12" height="12" fill="#e9d5c9"/><rect x="268" y="404" width="12" height="12" fill="#e9d5c8"/><rect x="280" y="404" width="12" height="12" fill="#e8d4c8"/><rect x="292" y="404" width="12" height="12" fill="#e7d3c7"/><rect x="304" y="404" width="12" height="12" fill="#e6d3c7"/><rect x="316" y="404" width="12" height="12" fill="#e7d3c7"/><rect x="328" y="404" width="12" height="12" fill="#e8d5c8"/><rect x="340" y="404" width="12" height="12" fill="#ead6ca"/><rect x="352" y="404" width="12" height="12" fill="#ecd8cc"/><rect x="364" y="404" width="12" height="12" fill="#efdbce"/><rect x="376" y="404" width="12" height="12" fill="#f1ddd0"/><rect x="388" y="404" width="12" height="12" fill="#f3dfd2"/><rect x="400" y="404" width="12" height="12" fill="#f5e0d3"/><rect x="412" y="404" width="12" height="12" fill="#f6e1d4"/><rect x="424" y="404" width="12" height="12" fill="#f5e1d4"/><rect x="436" y="404" width="12" height="12" fill="#f4dfd2"/><rect x="448" y="404" width="12" height="12" fill="#f1ddd0"/><rect x="460" y="404" width="12" height="12" fill="#eedacd"/><rect x="472" y="404" width="12" height="12" fill="#ead6c9"/><rect x="484" y="404" width="12" height="12" fill="#e5d1c5"/><rect x="496" y="404" width="12" height="12" fill="#e0cdc1"/><rect x="508" y="404" width="12" height="12" fill="#dac7bc"/><rect x="520" y="404" width="12" height="12" fill="#d3c1b6"/><rect x="532" y="404" width="12" height="12" fill="#cab8ae"/><rect x="544" y="404" width="12" height="12" fill="#bbaba1"/><rect x="556" y="404" width="12" height="12" fill="#a5978e"/><rect x="568" y="404" width="12" height="12" fill="#887c75"/><rect x="580" y="404" width="12" height="12" fill="#6f6560"/><rect x="592" y="404" width="12" height="12" fill="#645c56"/><rect x="148" y="416" width="12" height="12" fill="#6b625c"/><rect x="160" y="416" width="12" height="12" fill="#81766f"/><rect x="172" y="416" width="12" height="12" fill="#988b83"/><rect x="184" y="416" width="12" height="12" fill="#b2a39a"/><rect x="196" y="416" width="12" height="12" fill="#c9b8ad"/><rect x="208" y="416" width="12" height="12" fill="#d9c7bb"/><rect x="220" y="416" width="12" height="12" fill="#e4d1c4"/><rect x="232" y="416" width="12" height="12" fill="#ebd7ca"/><rect x="244" y="416" width="12" height="12" fill="#eedacd"/><rect x="256" y="416" width="12" height="12" fill="#efdace"/><rect x="268" y="416" width="12" height="12" fill="#edd9cd"/><rect x="280" y="416" width="12" height="12" fill="#ecd8cb"/><rect x="292" y="416" width="12" height="12" fill="#ead6ca"/><rect x="304" y="416" width="12" height="12" fill="#e9d5c9"/><rect x="316" y="416" width="12" height="12" fill="#ead6c9"/><rect x="328" y="416" width="12" height="12" fill="#ebd7cb"/><rect x="340" y="416" width="12" height="12" fill="#edd9cc"/><rect x="352" y="416" width="12" height="12" fill="#efdbce"/><rect x="364" y="416" width="12" height="12" fill="#f1ddd0"/><rect x="376" y="416" width="12" height="12" fill="#f4dfd2"/><rect x="388" y="416" width="12" height="12" fill="#f6e1d4"/><rect x="400" y="416" width="12" height="12" fill="#f7e2d5"/><rect x="412" y="416" width="12" height="12" fill="#f8e3d6"/><rect x="424" y="416" width="12" height="12" fill="#f7e2d5"/><rect x="436" y="416" width="12" height="12" fill="#f6e1d4"/><rect x="448" y="416" width="12" height="12" fill="#f3dfd2"/><rect x="460" y="416" width="12" height="12" fill="#f0dbcf"/><rect x="472" y="416" width="12" height="12" fill="#ecd8cb"/><rect x="484" y="416" width="12" height="12" fill="#e8d4c8"/><rect x="496" y="416" width="12" height="12" fill="#e4d0c4"/><rect x="508" y="416" width="12" height="12" fill="#e0cdc1"/><rect x="520" y="416" width="12" height="12" fill="#dbc8bc"/><rect x="532" y="416" width="12" height="12" fill="#d3c1b6"/><rect x="544" y="416" width="12" height="12" fill="#c4b3a9"/><rect x="556" y="416" width="12" height="12" fill="#ae9f96"/><rect x="568" y="416" width="12" height="12" fill="#8a7f77"/><rect x="580" y="416" width="12" height="12" fill="#716862"/><rect x="592" y="416" width="12" height="12" fill="#645c56"/><rect x="148" y="428" width="12" height="12" fill="#6a615c"/><rect x="160" y="428" width="12" height="12" fill="#80756e"/><rect x="172" y="428" width="12" height="12" fill="#978a82"/><rect x="184" y="428" width="12" height="12" fill="#b1a299"/><rect x="196" y="428" width="12" height="12" fill="#c9b8ad"/><rect x="208" y="428" width="12" height="12" fill="#dac8bc"/><rect x="220" y="428" width="12" height="12" fill="#e7d3c7"/><rect x="232" y="428" width="12" height="12" fill="#eedace"/><rect x="244" y="428" width="12" height="12" fill="#f2ded1"/><rect x="256" y="428" width="12" height="12" fill="#f3ded1"/><rect x="268" y="428" width="12" height="12" fill="#f1ddd0"/><rect x="280" y="428" width="12" height="12" fill="#efdace"/><rect x="292" y="428" width="12" height="12" fill="#ecd8cc"/><rect x="304" y="428" width="12" height="12" fill="#ebd7cb"/><rect x="316" y="428" width="12" height="12" fill="#ecd8cb"/><rect x="328" y="428" width="12" height="12" fill="#edd9cc"/><rect x="340" y="428" width="12" height="12" fill="#efdbce"/><rect x="352" y="428" width="12" height="12" fill="#f1dcd0"/><rect x="364" y="428" width="12" height="12" fill="#f3ded2"/><rect x="376" y="428" width="12" height="12" fill="#f5e1d4"/><rect x="388" y="428" width="12" height="12" fill="#f7e2d5"/><rect x="400" y="428" width="12" height="12" fill="#f8e3d6"/><rect x="412" y="428" width="12" height="12" fill="#f8e3d6"/><rect x="424" y="428" width="12" height="12" fill="#f8e3d6"/><rect x="436" y="428" width="12" height="12" fill="#f7e2d5"/><rect x="448" y="428" width="12" height="12" fill="#f4dfd2"/><rect x="460" y="428" width="12" height="12" fill="#f0dccf"/><rect x="472" y="428" width="12" height="12" fill="#ecd8cb"/><rect x="484" y="428" width="12" height="12" fill="#e8d4c8"/><rect x="496" y="428" width="12" height="12" fill="#e4d0c4"/><rect x="508" y="428" width="12" height="12" fill="#e0cdc1"/><rect x="520" y="428" width="12" height="12" fill="#dcc9bd"/><rect x="532" y="428" width="12" height="12" fill="#d4c2b6"/><rect x="544" y="428" width="12" height="12" fill="#c5b4aa"/><rect x="556" y="428" width="12" height="12" fill="#ae9f96"/><rect x="568" y="428" width="12" height="12" fill="#8f837b"/><rect x="580" y="428" width="12" height="12" fill="#736963"/><rect x="592" y="428" width="12" height="12" fill="#645c56"/><rect x="148" y="440" width="12" height="12" fill="#69605b"/><rect x="160" y="440" width="12" height="12" fill="#81766f"/><rect x="172" y="440" width="12" height="12" fill="#988b83"/><rect x="184" y="440" width="12" height="12" fill="#b0a198"/><rect x="196" y="440" width="12" height="12" fill="#c7b6ab"/><rect x="208" y="440" width="12" height="12" fill="#dac7bc"/><rect x="220" y="440" width="12" height="12" fill="#e8d4c8"/><rect x="232" y="440" width="12" height="12" fill="#f1dcd0"/><rect x="244" y="440" width="12" height="12" fill="#f6e1d4"/><rect x="256" y="440" width="12" height="12" fill="#f6e1d4"/><rect x="268" y="440" width="12" height="12" fill="#f4e0d3"/><rect x="280" y="440" width="12" height="12" fill="#f1ddd0"/><rect x="292" y="440" width="12" height="12" fill="#eedacd"/><rect x="304" y="440" width="12" height="12" fill="#edd9cc"/><rect x="316" y="440" width="12" height="12" fill="#eedacd"/><rect x="328" y="440" width="12" height="12" fill="#efdbce"/><rect x="340" y="440" width="12" height="12" fill="#f1dcd0"/><rect x="352" y="440" width="12" height="12" fill="#f3ded1"/><rect x="364" y="440" width="12" height="12" fill="#f5e0d3"/><rect x="376" y="440" width="12" height="12" fill="#f7e2d5"/><rect x="388" y="440" width="12" height="12" fill="#f8e3d6"/><rect x="400" y="440" width="12" height="12" fill="#f8e3d6"/><rect x="412" y="440" width="12" height="12" fill="#f8e3d6"/><rect x="424" y="440" width="12" height="12" fill="#f8e3d6"/><rect x="436" y="440" width="12" height="12" fill="#f7e2d5"/><rect x="448" y="440" width="12" height="12" fill="#f3dfd2"/><rect x="460" y="440" width="12" height="12" fill="#efdbce"/><rect x="472" y="440" width="12" height="12" fill="#ead6ca"/><rect x="484" y="440" width="12" height="12" fill="#e5d1c5"/><rect x="496" y="440" width="12" height="12" fill="#e0cdc1"/><rect x="508" y="440" width="12" height="12" fill="#ddcabe"/><rect x="520" y="440" width="12" height="12" fill="#d8c5ba"/><rect x="532" y="440" width="12" height="12" fill="#d0beb3"/><rect x="544" y="440" width="12" height="12" fill="#c1b1a7"/><rect x="556" y="440" width="12" height="12" fill="#ab9c93"/><rect x="568" y="440" width="12" height="12" fill="#8f827b"/><rect x="580" y="440" width="12" height="12" fill="#726862"/><rect x="592" y="440" width="12" height="12" fill="#645c56"/><rect x="148" y="452" width="12" height="12" fill="#645c56"/><rect x="160" y="452" width="12" height="12" fill="#7d736c"/><rect x="172" y="452" width="12" height="12" fill="#948880"/><rect x="184" y="452" width="12" height="12" fill="#ac9e94"/><rect x="196" y="452" width="12" height="12" fill="#c4b3a9"/><rect x="208" y="452" width="12" height="12" fill="#d8c6ba"/><rect x="220" y="452" width="12" height="12" fill="#e8d4c8"/><rect x="232" y="452" width="12" height="12" fill="#f2ded1"/><rect x="244" y="452" width="12" height="12" fill="#f8e3d5"/><rect x="256" y="452" width="12" height="12" fill="#f8e3d6"/><rect x="268" y="452" width="12" height="12" fill="#f7e2d5"/><rect x="280" y="452" width="12" height="12" fill="#f4dfd2"/><rect x="292" y="452" width="12" height="12" fill="#f1dccf"/><rect x="304" y="452" width="12" height="12" fill="#f0dbcf"/><rect x="316" y="452" width="12" height="12" fill="#f0dccf"/><rect x="328" y="452" width="12" height="12" fill="#f2ddd0"/><rect x="340" y="452" width="12" height="12" fill="#f3ded2"/><rect x="352" y="452" width="12" height="12" fill="#f5e0d3"/><rect x="364" y="452" width="12" height="12" fill="#f6e1d4"/><rect x="376" y="452" width="12" height="12" fill="#f8e3d6"/><rect x="388" y="452" width="12" height="12" fill="#f8e3d6"/><rect x="400" y="452" width="12" height="12" fill="#f8e3d6"/><rect x="412" y="452" width="12" height="12" fill="#f8e3d6"/><rect x="424" y="452" width="12" height="12" fill="#f8e3d6"/><rect x="436" y="452" width="12" height="12" fill="#f6e1d4"/><rect x="448" y="452" width="12" height="12" fill="#f2ddd0"/><rect x="460" y="452" width="12" height="12" fill="#edd9cc"/><rect x="472" y="452" width="12" height="12" fill="#e7d3c7"/><rect x="484" y="452" width="12" height="12" fill="#e0cdc1"/><rect x="496" y="452" width="12" height="12" fill="#dac8bc"/><rect x="508" y="452" width="12" height="12" fill="#d6c4b9"/><rect x="520" y="452" width="12" height="12" fill="#d1bfb4"/><rect x="532" y="452" width="12" height="12" fill="#c8b7ad"/><rect x="544" y="452" width="12" height="12" fill="#bbaba1"/><rect x="556" y="452" width="12" height="12" fill="#a6988f"/><rect x="568" y="452" width="12" height="12" fill="#8b7f77"/><rect x="580" y="452" width="12" height="12" fill="#6e655f"/><rect x="592" y="452" width="12" height="12" fill="#645c56"/><rect x="148" y="464" width="12" height="12" fill="#645c56"/><rect x="160" y="464" width="12" height="12" fill="#726862"/><rect x="172" y="464" width="12" height="12" fill="#8a7f77"/><rect x="184" y="464" width="12" height="12" fill="#a4968d"/><rect x="196" y="464" width="12" height="12" fill="#bdada3"/><rect x="208" y="464" width="12" height="12" fill="#d4c2b7"/><rect x="220" y="464" width="12" height="12" fill="#e6d2c6"/><rect x="232" y="464" width="12" height="12" fill="#f2ddd0"/><rect x="244" y="464" width="12" height="12" fill="#f8e3d6"/><rect x="256" y="464" width="12" height="12" fill="#f8e3d6"/><rect x="268" y="464" width="12" height="12" fill="#f8e3d6"/><rect x="280" y="464" width="12" height="12" fill="#f6e1d4"/><rect x="292" y="464" width="12" height="12" fill="#f4dfd2"/><rect x="304" y="464" width="12" height="12" fill="#f2ded1"/><rect x="316" y="464" width="12" height="12" fill="#f3ded1"/><rect x="328" y="464" width="12" height="12" fill="#f4dfd2"/><rect x="340" y="464" width="12" height="12" fill="#f5e0d3"/><rect x="352" y="464" width="12" height="12" fill="#f6e1d4"/><rect x="364" y="464" width="12" height="12" fill="#f7e2d5"/><rect x="376" y="464" width="12" height="12" fill="#f8e3d6"/><rect x="388" y="464" width="12" height="12" fill="#f8e3d6"/><rect x="400" y="464" width="12" height="12" fill="#f8e3d6"/><rect x="412" y="464" width="12" height="12" fill="#f8e3d6"/><rect x="424" y="464" width="12" height="12" fill="#f7e2d5"/><rect x="436" y="464" width="12" height="12" fill="#f4dfd2"/><rect x="448" y="464" width="12" height="12" fill="#f0dbcf"/><rect x="460" y="464" width="12" height="12" fill="#ead6ca"/><rect x="472" y="464" width="12" height="12" fill="#e3d0c4"/><rect x="484" y="464" width="12" height="12" fill="#dcc9be"/><rect x="496" y="464" width="12" height="12" fill="#d5c3b8"/><rect x="508" y="464" width="12" height="12" fill="#cfbdb2"/><rect x="520" y="464" width="12" height="12" fill="#c7b6ac"/><rect x="532" y="464" width="12" height="12" fill="#beada3"/><rect x="544" y="464" width="12" height="12" fill="#b0a198"/><rect x="556" y="464" width="12" height="12" fill="#9e9088"/><rect x="568" y="464" width="12" height="12" fill="#837871"/><rect x="580" y="464" width="12" height="12" fill="#685f5a"/><rect x="592" y="464" width="12" height="12" fill="#645c56"/><rect x="148" y="476" width="12" height="12" fill="#645c56"/><rect x="160" y="476" width="12" height="12" fill="#645c56"/><rect x="172" y="476" width="12" height="12" fill="#7b706a"/><rect x="184" y="476" width="12" height="12" fill="#978a82"/><rect x="196" y="476" width="12" height="12" fill="#b4a59b"/><rect x="208" y="476" width="12" height="12" fill="#cebcb1"/><rect x="220" y="476" width="12" height="12" fill="#e1cec2"/><rect x="232" y="476" width="12" height="12" fill="#efdbce"/><rect x="244" y="476" width="12" height="12" fill="#f7e2d5"/><rect x="256" y="476" width="12" height="12" fill="#f8e3d6"/><rect x="268" y="476" width="12" height="12" fill="#f8e3d6"/><rect x="280" y="476" width="12" height="12" fill="#f7e2d5"/><rect x="292" y="476" width="12" height="12" fill="#f5e0d3"/><rect x="304" y="476" width="12" height="12" fill="#f4dfd2"/><rect x="316" y="476" width="12" height="12" fill="#f4dfd2"/><rect x="328" y="476" width="12" height="12" fill="#f5e0d3"/><rect x="340" y="476" width="12" height="12" fill="#f6e1d4"/><rect x="352" y="476" width="12" height="12" fill="#f7e2d5"/><rect x="364" y="476" width="12" height="12" fill="#f7e2d5"/><rect x="376" y="476" width="12" height="12" fill="#f8e3d5"/><rect x="388" y="476" width="12" height="12" fill="#f8e3d6"/><rect x="400" y="476" width="12" height="12" fill="#f8e3d6"/><rect x="412" y="476" width="12" height="12" fill="#f7e2d5"/><rect x="424" y="476" width="12" height="12" fill="#f5e0d3"/><rect x="436" y="476" width="12" height="12" fill="#f1ddd0"/><rect x="448" y="476" width="12" height="12" fill="#ecd8cc"/><rect x="460" y="476" width="12" height="12" fill="#e6d3c7"/><rect x="472" y="476" width="12" height="12" fill="#dfccc1"/><rect x="484" y="476" width="12" height="12" fill="#d8c5ba"/><rect x="496" y="476" width="12" height="12" fill="#cfbeb3"/><rect x="508" y="476" width="12" height="12" fill="#c6b6ab"/><rect x="520" y="476" width="12" height="12" fill="#bcaca2"/><rect x="532" y="476" width="12" height="12" fill="#afa097"/><rect x="544" y="476" width="12" height="12" fill="#a0928a"/><rect x="556" y="476" width="12" height="12" fill="#8d8179"/><rect x="568" y="476" width="12" height="12" fill="#766c65"/><rect x="580" y="476" width="12" height="12" fill="#645c56"/><rect x="592" y="476" width="12" height="12" fill="#645c56"/><rect x="148" y="488" width="12" height="12" fill="#645c56"/><rect x="160" y="488" width="12" height="12" fill="#645c56"/><rect x="172" y="488" width="12" height="12" fill="#685f5a"/><rect x="184" y="488" width="12" height="12" fill="#867b74"/><rect x="196" y="488" width="12" height="12" fill="#a79890"/><rect x="208" y="488" width="12" height="12" fill="#c2b2a7"/><rect x="220" y="488" width="12" height="12" fill="#d9c6bb"/><rect x="232" y="488" width="12" height="12" fill="#e9d5c9"/><rect x="244" y="488" width="12" height="12" fill="#f2ded1"/><rect x="256" y="488" width="12" height="12" fill="#f6e1d4"/><rect x="268" y="488" width="12" height="12" fill="#f6e1d4"/><rect x="280" y="488" width="12" height="12" fill="#f4dfd2"/><rect x="292" y="488" width="12" height="12" fill="#f3ded1"/><rect x="304" y="488" width="12" height="12" fill="#f3ded1"/><rect x="316" y="488" width="12" height="12" fill="#f3dfd2"/><rect x="328" y="488" width="12" height="12" fill="#f5e0d3"/><rect x="340" y="488" width="12" height="12" fill="#f6e1d4"/><rect x="352" y="488" width="12" height="12" fill="#f6e1d4"/><rect x="364" y="488" width="12" height="12" fill="#f6e1d4"/><rect x="376" y="488" width="12" height="12" fill="#f5e1d4"/><rect x="388" y="488" width="12" height="12" fill="#f5e1d4"/><rect x="400" y="488" width="12" height="12" fill="#f5e0d3"/><rect x="412" y="488" width="12" height="12" fill="#f4dfd2"/><rect x="424" y="488" width="12" height="12" fill="#f1ddd0"/><rect x="436" y="488" width="12" height="12" fill="#edd9cd"/><rect x="448" y="488" width="12" height="12" fill="#e8d4c8"/><rect x="460" y="488" width="12" height="12" fill="#e1cec2"/><rect x="472" y="488" width="12" height="12" fill="#dac7bc"/><rect x="484" y="488" width="12" height="12" fill="#d2c0b5"/><rect x="496" y="488" width="12" height="12" fill="#c8b7ad"/><rect x="508" y="488" width="12" height="12" fill="#bdada3"/><rect x="520" y="488" width="12" height="12" fill="#aea096"/><rect x="532" y="488" width="12" height="12" fill="#9d9088"/><rect x="544" y="488" width="12" height="12" fill="#8b8078"/><rect x="556" y="488" width="12" height="12" fill="#796e68"/><rect x="568" y="488" width="12" height="12" fill="#655c57"/><rect x="580" y="488" width="12" height="12" fill="#645c56"/><rect x="592" y="488" width="12" height="12" fill="#645c56"/><rect x="148" y="500" width="12" height="12" fill="#645c56"/><rect x="160" y="500" width="12" height="12" fill="#645c56"/><rect x="172" y="500" width="12" height="12" fill="#645c56"/><rect x="184" y="500" width="12" height="12" fill="#706660"/><rect x="196" y="500" width="12" height="12" fill="#90837c"/><rect x="208" y="500" width="12" height="12" fill="#ad9e95"/><rect x="220" y="500" width="12" height="12" fill="#c9b8ad"/><rect x="232" y="500" width="12" height="12" fill="#decbbf"/><rect x="244" y="500" width="12" height="12" fill="#e9d5c9"/><rect x="256" y="500" width="12" height="12" fill="#eedacd"/><rect x="268" y="500" width="12" height="12" fill="#efdace"/><rect x="280" y="500" width="12" height="12" fill="#eedacd"/><rect x="292" y="500" width="12" height="12" fill="#edd9cd"/><rect x="304" y="500" width="12" height="12" fill="#eedace"/><rect x="316" y="500" width="12" height="12" fill="#f1dccf"/><rect x="328" y="500" width="12" height="12" fill="#f3ded1"/><rect x="340" y="500" width="12" height="12" fill="#f4dfd2"/><rect x="352" y="500" width="12" height="12" fill="#f3dfd2"/><rect x="364" y="500" width="12" height="12" fill="#f2ded1"/><rect x="376" y="500" width="12" height="12" fill="#f1ddd0"/><rect x="388" y="500" width="12" height="12" fill="#f1ddd0"/><rect x="400" y="500" width="12" height="12" fill="#f1ddd0"/><rect x="412" y="500" width="12" height="12" fill="#f0dbcf"/><rect x="424" y="500" width="12" height="12" fill="#ecd8cc"/><rect x="436" y="500" width="12" height="12" fill="#e8d4c8"/><rect x="448" y="500" width="12" height="12" fill="#e1cec2"/><rect x="460" y="500" width="12" height="12" fill="#dac7bc"/><rect x="472" y="500" width="12" height="12" fill="#d2c0b5"/><rect x="484" y="500" width="12" height="12" fill="#c9b8ad"/><rect x="496" y="500" width="12" height="12" fill="#c0afa5"/><rect x="508" y="500" width="12" height="12" fill="#b4a49b"/><rect x="520" y="500" width="12" height="12" fill="#a2948b"/><rect x="532" y="500" width="12" height="12" fill="#8b7f78"/><rect x="544" y="500" width="12" height="12" fill="#776d67"/><rect x="556" y="500" width="12" height="12" fill="#655d57"/><rect x="568" y="500" width="12" height="12" fill="#645c56"/><rect x="580" y="500" width="12" height="12" fill="#645c56"/><rect x="592" y="500" width="12" height="12" fill="#645c56"/><rect x="148" y="512" width="12" height="12" fill="#645c56"/><rect x="160" y="512" width="12" height="12" fill="#645c56"/><rect x="172" y="512" width="12" height="12" fill="#645c56"/><rect x="184" y="512" width="12" height="12" fill="#645c56"/><rect x="196" y="512" width="12" height="12" fill="#6d645e"/><rect x="208" y="512" width="12" height="12" fill="#8e827b"/><rect x="220" y="512" width="12" height="12" fill="#b2a399"/><rect x="232" y="512" width="12" height="12" fill="#cbbaaf"/><rect x="244" y="512" width="12" height="12" fill="#dac7bc"/><rect x="256" y="512" width="12" height="12" fill="#e0cdc1"/><rect x="268" y="512" width="12" height="12" fill="#e3d0c4"/><rect x="280" y="512" width="12" height="12" fill="#e4d0c4"/><rect x="292" y="512" width="12" height="12" fill="#e4d1c5"/><rect x="304" y="512" width="12" height="12" fill="#e7d4c7"/><rect x="316" y="512" width="12" height="12" fill="#ecd8cb"/><rect x="328" y="512" width="12" height="12" fill="#efdbce"/><rect x="340" y="512" width="12" height="12" fill="#f0dccf"/><rect x="352" y="512" width="12" height="12" fill="#efdbce"/><rect x="364" y="512" width="12" height="12" fill="#edd9cc"/><rect x="376" y="512" width="12" height="12" fill="#ecd8cb"/><rect x="388" y="512" width="12" height="12" fill="#ecd8cb"/><rect x="400" y="512" width="12" height="12" fill="#ecd8cb"/><rect x="412" y="512" width="12" height="12" fill="#ead6ca"/><rect x="424" y="512" width="12" height="12" fill="#e6d2c6"/><rect x="436" y="512" width="12" height="12" fill="#e0cdc1"/><rect x="448" y="512" width="12" height="12" fill="#d8c6ba"/><rect x="460" y="512" width="12" height="12" fill="#cfbeb3"/><rect x="472" y="512" width="12" height="12" fill="#c6b5ab"/><rect x="484" y="512" width="12" height="12" fill="#bcaca2"/><rect x="496" y="512" width="12" height="12" fill="#b4a49b"/><rect x="508" y="512" width="12" height="12" fill="#aa9c93"/><rect x="520" y="512" width="12" height="12" fill="#988b83"/><rect x="532" y="512" width="12" height="12" fill="#7c716b"/><rect x="544" y="512" width="12" height="12" fill="#665d58"/><rect x="556" y="512" width="12" height="12" fill="#645c56"/><rect x="568" y="512" width="12" height="12" fill="#645c56"/><rect x="580" y="512" width="12" height="12" fill="#645c56"/><rect x="592" y="512" width="12" height="12" fill="#645c56"/><rect x="148" y="524" width="12" height="12" fill="#645c56"/><rect x="160" y="524" width="12" height="12" fill="#645c56"/><rect x="172" y="524" width="12" height="12" fill="#645c56"/><rect x="184" y="524" width="12" height="12" fill="#645c56"/><rect x="196" y="524" width="12" height="12" fill="#645c56"/><rect x="208" y="524" width="12" height="12" fill="#6e645e"/><rect x="220" y="524" width="12" height="12" fill="#8f837b"/><rect x="232" y="524" width="12" height="12" fill="#ad9f95"/><rect x="244" y="524" width="12" height="12" fill="#c0b0a6"/><rect x="256" y="524" width="12" height="12" fill="#cdbbb1"/><rect x="268" y="524" width="12" height="12" fill="#d5c2b7"/><rect x="280" y="524" width="12" height="12" fill="#d8c5ba"/><rect x="292" y="524" width="12" height="12" fill="#d9c6bb"/><rect x="304" y="524" width="12" height="12" fill="#ddcbbf"/><rect x="316" y="524" width="12" height="12" fill="#e5d1c5"/><rect x="328" y="524" width="12" height="12" fill="#ead6ca"/><rect x="340" y="524" width="12" height="12" fill="#ecd8cb"/><rect x="352" y="524" width="12" height="12" fill="#ead6ca"/><rect x="364" y="524" width="12" height="12" fill="#e6d3c7"/><rect x="376" y="524" width="12" height="12" fill="#e4d1c5"/><rect x="388" y="524" width="12" height="12" fill="#e5d2c6"/><rect x="400" y="524" width="12" height="12" fill="#e5d2c6"/><rect x="412" y="524" width="12" height="12" fill="#e3cfc3"/><rect x="424" y="524" width="12" height="12" fill="#ddcabf"/><rect x="436" y="524" width="12" height="12" fill="#d5c3b8"/><rect x="448" y="524" width="12" height="12" fill="#ccbaaf"/><rect x="460" y="524" width="12" height="12" fill="#c1b1a6"/><rect x="472" y="524" width="12" height="12" fill="#b6a69d"/><rect x="484" y="524" width="12" height="12" fill="#aa9b92"/><rect x="496" y="524" width="12" height="12" fill="#a0928a"/><rect x="508" y="524" width="12" height="12" fill="#9c8f87"/><rect x="520" y="524" width="12" height="12" fill="#8f837c"/><rect x="532" y="524" width="12" height="12" fill="#736963"/><rect x="544" y="524" width="12" height="12" fill="#645c56"/><rect x="556" y="524" width="12" height="12" fill="#645c56"/><rect x="568" y="524" width="12" height="12" fill="#645c56"/><rect x="580" y="524" width="12" height="12" fill="#645c56"/><rect x="592" y="524" width="12" height="12" fill="#645c56"/><rect x="148" y="536" width="12" height="12" fill="#645c56"/><rect x="160" y="536" width="12" height="12" fill="#645c56"/><rect x="172" y="536" width="12" height="12" fill="#645c56"/><rect x="184" y="536" width="12" height="12" fill="#645c56"/><rect x="196" y="536" width="12" height="12" fill="#645c56"/><rect x="208" y="536" width="12" height="12" fill="#645c56"/><rect x="220" y="536" width="12" height="12" fill="#675e59"/><rect x="232" y="536" width="12" height="12" fill="#847972"/><rect x="244" y="536" width="12" height="12" fill="#9d8f87"/><rect x="256" y="536" width="12" height="12" fill="#b2a39a"/><rect x="268" y="536" width="12" height="12" fill="#c6b5aa"/><rect x="280" y="536" width="12" height="12" fill="#cdbcb1"/><rect x="292" y="536" width="12" height="12" fill="#cbbaaf"/><rect x="304" y="536" width="12" height="12" fill="#d1c0b4"/><rect x="316" y="536" width="12" height="12" fill="#dcc9bd"/><rect x="328" y="536" width="12" height="12" fill="#e3d0c4"/><rect x="340" y="536" width="12" height="12" fill="#e4d1c5"/><rect x="352" y="536" width="12" height="12" fill="#e2cec2"/><rect x="364" y="536" width="12" height="12" fill="#decbbf"/><rect x="376" y="536" width="12" height="12" fill="#dccabe"/><rect x="388" y="536" width="12" height="12" fill="#ddcabe"/><rect x="400" y="536" width="12" height="12" fill="#ddcabe"/><rect x="412" y="536" width="12" height="12" fill="#d9c6bb"/><rect x="424" y="536" width="12" height="12" fill="#d1bfb4"/><rect x="436" y="536" width="12" height="12" fill="#c7b6ac"/><rect x="448" y="536" width="12" height="12" fill="#bcaca2"/><rect x="460" y="536" width="12" height="12" fill="#b0a197"/><rect x="472" y="536" width="12" height="12" fill="#a2958c"/><rect x="484" y="536" width="12" height="12" fill="#93877f"/><rect x="496" y="536" width="12" height="12" fill="#837871"/><rect x="508" y="536" width="12" height="12" fill="#786e67"/><rect x="520" y="536" width="12" height="12" fill="#776d67"/><rect x="532" y="536" width="12" height="12" fill="#645c56"/><rect x="544" y="536" width="12" height="12" fill="#645c56"/><rect x="556" y="536" width="12" height="12" fill="#645c56"/><rect x="568" y="536" width="12" height="12" fill="#645c56"/><rect x="580" y="536" width="12" height="12" fill="#645c56"/><rect x="592" y="536" width="12" height="12" fill="#645c56"/><rect x="148" y="548" width="12" height="12" fill="#645c56"/><rect x="160" y="548" width="12" height="12" fill="#645c56"/><rect x="172" y="548" width="12" height="12" fill="#645c56"/><rect x="184" y="548" width="12" height="12" fill="#645c56"/><rect x="196" y="548" width="12" height="12" fill="#645c56"/><rect x="208" y="548" width="12" height="12" fill="#645c56"/><rect x="220" y="548" width="12" height="12" fill="#645c56"/><rect x="232" y="548" width="12" height="12" fill="#645c56"/><rect x="244" y="548" width="12" height="12" fill="#756b64"/><rect x="256" y="548" width="12" height="12" fill="#90847c"/><rect x="268" y="548" width="12" height="12" fill="#afa097"/><rect x="280" y="548" width="12" height="12" fill="#bcaca2"/><rect x="292" y="548" width="12" height="12" fill="#baaaa0"/><rect x="304" y="548" width="12" height="12" fill="#c0b0a6"/><rect x="316" y="548" width="12" height="12" fill="#cebcb1"/><rect x="328" y="548" width="12" height="12" fill="#d8c5ba"/><rect x="340" y="548" width="12" height="12" fill="#d8c5ba"/><rect x="352" y="548" width="12" height="12" fill="#d3c1b6"/><rect x="364" y="548" width="12" height="12" fill="#d0beb3"/><rect x="376" y="548" width="12" height="12" fill="#cfbdb2"/><rect x="388" y="548" width="12" height="12" fill="#d0beb3"/><rect x="400" y="548" width="12" height="12" fill="#d0beb3"/><rect x="412" y="548" width="12" height="12" fill="#cbb9af"/><rect x="424" y="548" width="12" height="12" fill="#c1b1a7"/><rect x="436" y="548" width="12" height="12" fill="#b5a69c"/><rect x="448" y="548" width="12" height="12" fill="#a99a91"/><rect x="460" y="548" width="12" height="12" fill="#9b8e86"/><rect x="472" y="548" width="12" height="12" fill="#8e827a"/><rect x="484" y="548" width="12" height="12" fill="#7e736c"/><rect x="496" y="548" width="12" height="12" fill="#6c625d"/><rect x="508" y="548" width="12" height="12" fill="#645c56"/><rect x="520" y="548" width="12" height="12" fill="#645c56"/><rect x="532" y="548" width="12" height="12" fill="#645c56"/><rect x="544" y="548" width="12" height="12" fill="#645c56"/><rect x="556" y="548" width="12" height="12" fill="#645c56"/><rect x="568" y="548" width="12" height="12" fill="#645c56"/><rect x="580" y="548" width="12" height="12" fill="#645c56"/><rect x="592" y="548" width="12" height="12" fill="#645c56"/><rect x="148" y="560" width="12" height="12" fill="#645c56"/><rect x="160" y="560" width="12" height="12" fill="#645c56"/><rect x="172" y="560" width="12" height="12" fill="#645c56"/><rect x="184" y="560" width="12" height="12" fill="#645c56"/><rect x="196" y="560" width="12" height="12" fill="#645c56"/><rect x="208" y="560" width="12" height="12" fill="#645c56"/><rect x="220" y="560" width="12" height="12" fill="#645c56"/><rect x="232" y="560" width="12" height="12" fill="#645c56"/><rect x="244" y="560" width="12" height="12" fill="#645c56"/><rect x="256" y="560" width="12" height="12" fill="#6a615b"/><rect x="268" y="560" width="12" height="12" fill="#7d726c"/><rect x="280" y="560" width="12" height="12" fill="#91857d"/><rect x="292" y="560" width="12" height="12" fill="#978b83"/><rect x="304" y="560" width="12" height="12" fill="#a1938b"/><rect x="316" y="560" width="12" height="12" fill="#b4a49b"/><rect x="328" y="560" width="12" height="12" fill="#c2b1a7"/><rect x="340" y="560" width="12" height="12" fill="#c0b0a5"/><rect x="352" y="560" width="12" height="12" fill="#bcaca2"/><rect x="364" y="560" width="12" height="12" fill="#b8a89f"/><rect x="376" y="560" width="12" height="12" fill="#b7a79e"/><rect x="388" y="560" width="12" height="12" fill="#baaaa0"/><rect x="400" y="560" width="12" height="12" fill="#baaba1"/><rect x="412" y="560" width="12" height="12" fill="#b5a69c"/><rect x="424" y="560" width="12" height="12" fill="#ac9d94"/><rect x="436" y="560" width="12" height="12" fill="#9f9189"/><rect x="448" y="560" width="12" height="12" fill="#92857e"/><rect x="460" y="560" width="12" height="12" fill="#857972"/><rect x="472" y="560" width="12" height="12" fill="#776d67"/><rect x="484" y="560" width="12" height="12" fill="#68605a"/><rect x="496" y="560" width="12" height="12" fill="#645c56"/><rect x="508" y="560" width="12" height="12" fill="#645c56"/><rect x="520" y="560" width="12" height="12" fill="#645c56"/><rect x="532" y="560" width="12" height="12" fill="#645c56"/><rect x="544" y="560" width="12" height="12" fill="#645c56"/><rect x="556" y="560" width="12" height="12" fill="#645c56"/><rect x="568" y="560" width="12" height="12" fill="#645c56"/><rect x="580" y="560" width="12" height="12" fill="#645c56"/><rect x="592" y="560" width="12" height="12" fill="#645c56"/><rect x="148" y="572" width="12" height="12" fill="#645c56"/><rect x="160" y="572" width="12" height="12" fill="#645c56"/><rect x="172" y="572" width="12" height="12" fill="#645c56"/><rect x="184" y="572" width="12" height="12" fill="#645c56"/><rect x="196" y="572" width="12" height="12" fill="#645c56"/><rect x="208" y="572" width="12" height="12" fill="#645c56"/><rect x="220" y="572" width="12" height="12" fill="#645c56"/><rect x="232" y="572" width="12" height="12" fill="#645c56"/><rect x="244" y="572" width="12" height="12" fill="#645c56"/><rect x="256" y="572" width="12" height="12" fill="#645c56"/><rect x="268" y="572" width="12" height="12" fill="#645c56"/><rect x="280" y="572" width="12" height="12" fill="#645c56"/><rect x="292" y="572" width="12" height="12" fill="#6c635d"/><rect x="304" y="572" width="12" height="12" fill="#766c66"/><rect x="316" y="572" width="12" height="12" fill="#897d76"/><rect x="328" y="572" width="12" height="12" fill="#978b83"/><rect x="340" y="572" width="12" height="12" fill="#9b8e85"/><rect x="352" y="572" width="12" height="12" fill="#9b8e85"/><rect x="364" y="572" width="12" height="12" fill="#998c84"/><rect x="376" y="572" width="12" height="12" fill="#968981"/><rect x="388" y="572" width="12" height="12" fill="#92867e"/><rect x="400" y="572" width="12" height="12" fill="#948880"/><rect x="412" y="572" width="12" height="12" fill="#978b83"/><rect x="424" y="572" width="12" height="12" fill="#90847c"/><rect x="436" y="572" width="12" height="12" fill="#847972"/><rect x="448" y="572" width="12" height="12" fill="#786e68"/><rect x="460" y="572" width="12" height="12" fill="#6c635d"/><rect x="472" y="572" width="12" height="12" fill="#645c56"/><rect x="484" y="572" width="12" height="12" fill="#645c56"/><rect x="496" y="572" width="12" height="12" fill="#645c56"/><rect x="508" y="572" width="12" height="12" fill="#645c56"/><rect x="520" y="572" width="12" height="12" fill="#645c56"/><rect x="532" y="572" width="12" height="12" fill="#645c56"/><rect x="544" y="572" width="12" height="12" fill="#645c56"/><rect x="556" y="572" width="12" height="12" fill="#645c56"/><rect x="568" y="572" width="12" height="12" fill="#645c56"/><rect x="580" y="572" width="12" height="12" fill="#645c56"/><rect x="592" y="572" width="12" height="12" fill="#645c56"/><rect x="148" y="584" width="12" height="12" fill="#645c56"/><rect x="160" y="584" width="12" height="12" fill="#645c56"/><rect x="172" y="584" width="12" height="12" fill="#645c56"/><rect x="184" y="584" width="12" height="12" fill="#645c56"/><rect x="196" y="584" width="12" height="12" fill="#645c56"/><rect x="208" y="584" width="12" height="12" fill="#645c56"/><rect x="220" y="584" width="12" height="12" fill="#645c56"/><rect x="232" y="584" width="12" height="12" fill="#645c56"/><rect x="244" y="584" width="12" height="12" fill="#645c56"/><rect x="256" y="584" width="12" height="12" fill="#645c56"/><rect x="268" y="584" width="12" height="12" fill="#645c56"/><rect x="280" y="584" width="12" height="12" fill="#645c56"/><rect x="292" y="584" width="12" height="12" fill="#645c56"/><rect x="304" y="584" width="12" height="12" fill="#645c56"/><rect x="316" y="584" width="12" height="12" fill="#645c56"/><rect x="328" y="584" width="12" height="12" fill="#6a615c"/><rect x="340" y="584" width="12" height="12" fill="#726862"/><rect x="352" y="584" width="12" height="12" fill="#766c66"/><rect x="364" y="584" width="12" height="12" fill="#786d67"/><rect x="376" y="584" width="12" height="12" fill="#776c66"/><rect x="388" y="584" width="12" height="12" fill="#756b64"/><rect x="400" y="584" width="12" height="12" fill="#776d67"/><rect x="412" y="584" width="12" height="12" fill="#786e67"/><rect x="424" y="584" width="12" height="12" fill="#716862"/><rect x="436" y="584" width="12" height="12" fill="#68605a"/><rect x="448" y="584" width="12" height="12" fill="#645c56"/><rect x="460" y="584" width="12" height="12" fill="#645c56"/><rect x="472" y="584" width="12" height="12" fill="#645c56"/><rect x="484" y="584" width="12" height="12" fill="#645c56"/><rect x="496" y="584" width="12" height="12" fill="#645c56"/><rect x="508" y="584" width="12" height="12" fill="#645c56"/><rect x="520" y="584" width="12" height="12" fill="#645c56"/><rect x="532" y="584" width="12" height="12" fill="#645c56"/><rect x="544" y="584" width="12" height="12" fill="#645c56"/><rect x="556" y="584" width="12" height="12" fill="#645c56"/><rect x="568" y="584" width="12" height="12" fill="#645c56"/><rect x="580" y="584" width="12" height="12" fill="#645c56"/><rect x="592" y="584" width="12" height="12" fill="#645c56"/><rect x="148" y="596" width="12" height="12" fill="#645c56"/><rect x="160" y="596" width="12" height="12" fill="#645c56"/><rect x="172" y="596" width="12" height="12" fill="#645c56"/><rect x="184" y="596" width="12" height="12" fill="#645c56"/><rect x="196" y="596" width="12" height="12" fill="#645c56"/><rect x="208" y="596" width="12" height="12" fill="#645c56"/><rect x="220" y="596" width="12" height="12" fill="#645c56"/><rect x="232" y="596" width="12" height="12" fill="#645c56"/><rect x="244" y="596" width="12" height="12" fill="#645c56"/><rect x="256" y="596" width="12" height="12" fill="#645c56"/><rect x="268" y="596" width="12" height="12" fill="#645c56"/><rect x="280" y="596" width="12" height="12" fill="#645c56"/><rect x="292" y="596" width="12" height="12" fill="#645c56"/><rect x="304" y="596" width="12" height="12" fill="#645c56"/><rect x="316" y="596" width="12" height="12" fill="#645c56"/><rect x="328" y="596" width="12" height="12" fill="#645c56"/><rect x="340" y="596" width="12" height="12" fill="#645c56"/><rect x="352" y="596" width="12" height="12" fill="#645c56"/><rect x="364" y="596" width="12" height="12" fill="#645c56"/><rect x="376" y="596" width="12" height="12" fill="#645c56"/><rect x="388" y="596" width="12" height="12" fill="#645c56"/><rect x="400" y="596" width="12" height="12" fill="#645c56"/><rect x="412" y="596" width="12" height="12" fill="#645c56"/><rect x="424" y="596" width="12" height="12" fill="#645c56"/><rect x="436" y="596" width="12" height="12" fill="#645c56"/><rect x="448" y="596" width="12" height="12" fill="#645c56"/><rect x="460" y="596" width="12" height="12" fill="#645c56"/><rect x="472" y="596" width="12" height="12" fill="#645c56"/><rect x="484" y="596" width="12" height="12" fill="#645c56"/><rect x="496" y="596" width="12" height="12" fill="#645c56"/><rect x="508" y="596" width="12" height="12" fill="#645c56"/><rect x="520" y="596" width="12" height="12" fill="#645c56"/><rect x="532" y="596" width="12" height="12" fill="#645c56"/><rect x="544" y="596" width="12" height="12" fill="#645c56"/><rect x="556" y="596" width="12" height="12" fill="#645c56"/><rect x="568" y="596" width="12" height="12" fill="#645c56"/><rect x="580" y="596" width="12" height="12" fill="#645c56"/><rect x="592" y="596" width="12" height="12" fill="#645c56"/></g></g><g opacity="0.45"><path d="M509.1 535.0 L489.3 548.0 L489.6 559.2 L491.6 557.9 L496.6 554.6 L501.4 551.3 L506.0 548.0 L510.3 544.9 L514.3 541.8 L515.2 541.1 L509.1 535.0Z" fill="rgb(124, 114, 107)" stroke="rgb(124, 114, 107)" stroke-width="0.7" stroke-linejoin="round"/>
<path d="M469.2 553.8 L463.9 562.8 L466.7 572.7 L469.3 571.4 L473.4 569.1 L477.6 566.7 L481.8 564.1 L469.2 553.8Z" fill="rgb(131, 120, 113)" stroke="rgb(131, 120, 113)" stroke-width="0.7" stroke-linejoin="round"/>
<path d="M409.0 590.9 L409.1 591.4 L409.3 591.4 L414.4 590.9 L419.5 590.3 L424.6 589.3 L430.0 588.0 L435.9 586.1 L442.1 583.8 L442.3 583.7 L438.6 574.8 L422.7 578.1 L409.0 590.9Z" fill="rgb(133, 121, 114)" stroke="rgb(133, 121, 114)" stroke-width="0.7" stroke-linejoin="round"/>
<path d="M409.0 590.9 L397.8 573.7 L385.2 586.6 L383.1 591.5 L385.6 591.7 L391.8 591.9 L397.9 591.9 L403.8 591.7 L409.1 591.4 L409.0 590.9Z" fill="rgb(122, 112, 106)" stroke="rgb(122, 112, 106)" stroke-width="0.7" stroke-linejoin="round"/>
<path d="M343.8 586.4 L347.8 587.2 L353.9 588.3 L360.3 589.3 L363.2 589.7 L360.9 576.5 L343.8 586.4Z" fill="rgb(136, 124, 117)" stroke="rgb(136, 124, 117)" stroke-width="0.7" stroke-linejoin="round"/>
<path d="M333.5 580.9 L325.6 559.3 L325.5 559.3 L309.4 570.9 L306.1 576.1 L307.6 576.3 L312.9 577.0 L318.0 578.0 L322.8 579.4 L327.4 581.1 L332.0 582.9 L333.2 583.3 L333.5 580.9Z" fill="rgb(157, 143, 135)" stroke="rgb(157, 143, 135)" stroke-width="0.7" stroke-linejoin="round"/>
<path d="M290.9 552.7 L274.8 562.6 L273.0 564.8 L277.6 567.2 L282.3 569.6 L287.1 571.7 L292.0 573.5 L295.5 574.4 L290.9 552.7Z" fill="rgb(153, 140, 132)" stroke="rgb(153, 140, 132)" stroke-width="0.7" stroke-linejoin="round"/>
<path d="M256.7 544.5 L229.9 537.9 L230.1 538.1 L234.3 541.1 L238.5 544.0 L243.0 547.0 L247.8 550.1 L252.8 553.2 L254.9 554.5 L256.7 544.5Z" fill="rgb(136, 125, 117)" stroke="rgb(136, 125, 117)" stroke-width="0.7" stroke-linejoin="round"/>
<path d="M230.7 533.7 L231.6 515.9 L230.3 511.2 L209.5 519.1 L209.7 519.3 L213.7 523.6 L217.9 527.7 L222.0 531.5 L226.1 534.9 L229.3 537.5 L230.7 533.7Z" fill="rgb(160, 146, 138)" stroke="rgb(160, 146, 138)" stroke-width="0.7" stroke-linejoin="round"/>
<path d="M198.2 482.9 L189.0 480.8 L179.9 483.2 L180.0 483.3 L183.0 487.8 L186.0 492.0 L189.0 496.0 L192.1 499.7 L195.2 503.4 L196.3 504.6 L199.5 499.9 L198.2 482.9Z" fill="rgb(144, 132, 124)" stroke="rgb(144, 132, 124)" stroke-width="0.7" stroke-linejoin="round"/>
<path d="M185.7 450.0 L179.6 447.9 L162.3 446.7 L163.0 450.0 L164.3 454.3 L165.9 458.3 L167.8 462.1 L169.8 466.0 L171.7 469.4 L183.3 457.0 L185.7 450.0Z" fill="rgb(139, 127, 120)" stroke="rgb(139, 127, 120)" stroke-width="0.7" stroke-linejoin="round"/>
<path d="M180.4 402.8 L161.4 397.3 L161.0 400.0 L160.4 405.0 L160.0 410.0 L159.8 415.0 L159.9 420.0 L160.0 424.3 L172.2 420.4 L179.8 414.5 L180.4 402.8Z" fill="rgb(135, 123, 116)" stroke="rgb(135, 123, 116)" stroke-width="0.7" stroke-linejoin="round"/>
<path d="M177.5 377.6 L197.4 366.7 L185.7 345.9 L182.5 350.0 L178.9 355.0 L175.6 360.0 L172.5 365.0 L169.8 370.0 L167.8 374.5 L177.5 377.6Z" fill="rgb(135, 123, 116)" stroke="rgb(135, 123, 116)" stroke-width="0.7" stroke-linejoin="round"/>
<path d="M220.3 330.6 L214.2 316.0 L210.3 319.8 L205.0 325.0 L200.1 330.1 L198.0 332.2 L220.3 330.6Z" fill="rgb(125, 115, 108)" stroke="rgb(125, 115, 108)" stroke-width="0.7" stroke-linejoin="round"/>
<path d="M235.4 310.2 L240.4 291.6 L237.1 294.8 L232.5 299.0 L227.2 303.8 L221.6 308.9 L216.4 313.9 L235.4 310.2Z" fill="rgb(120, 110, 104)" stroke="rgb(120, 110, 104)" stroke-width="0.7" stroke-linejoin="round"/>
<path d="M271.3 276.2 L269.2 270.9 L268.5 271.3 L261.4 275.8 L255.0 280.0 L249.7 283.8 L245.2 287.4 L241.2 291.0 L240.5 291.6 L246.3 294.5 L269.9 279.3 L271.3 276.2Z" fill="rgb(122, 112, 105)" stroke="rgb(122, 112, 105)" stroke-width="0.7" stroke-linejoin="round"/>
<path d="M313.3 254.2 L308.9 255.0 L300.2 256.9 L292.0 259.5 L290.0 260.3 L293.5 265.2 L311.0 269.6 L313.3 269.2 L313.3 254.2Z" fill="rgb(129, 118, 111)" stroke="rgb(129, 118, 111)" stroke-width="0.7" stroke-linejoin="round"/>
<path d="M331.6 260.9 L340.9 250.0 L334.0 251.0 L326.2 252.2 L320.7 253.0 L331.6 260.9Z" fill="rgb(119, 109, 103)" stroke="rgb(119, 109, 103)" stroke-width="0.7" stroke-linejoin="round"/>
<path d="M354.0 258.8 L355.2 259.2 L372.9 248.0 L372.4 248.0 L366.0 248.0 L359.8 248.2 L353.7 248.6 L347.5 249.2 L354.0 258.8Z" fill="rgb(122, 112, 106)" stroke="rgb(122, 112, 106)" stroke-width="0.7" stroke-linejoin="round"/>
<path d="M385.4 258.2 L387.9 264.7 L396.2 265.1 L407.0 251.1 L404.2 250.7 L398.0 250.0 L391.7 249.3 L385.3 248.7 L385.2 248.7 L385.4 258.2Z" fill="rgb(126, 115, 109)" stroke="rgb(126, 115, 109)" stroke-width="0.7" stroke-linejoin="round"/>
<path d="M430.3 276.5 L443.6 260.1 L442.3 259.6 L435.5 257.2 L429.0 255.3 L424.2 254.1 L430.3 276.5Z" fill="rgb(126, 116, 109)" stroke="rgb(126, 116, 109)" stroke-width="0.7" stroke-linejoin="round"/>
<path d="M493.2 284.3 L489.5 282.2 L485.2 279.8 L481.0 277.5 L477.1 275.3 L473.5 273.2 L472.1 272.4 L474.3 284.1 L491.7 285.7 L493.2 284.3Z" fill="rgb(119, 109, 103)" stroke="rgb(119, 109, 103)" stroke-width="0.7" stroke-linejoin="round"/>
<path d="M524.9 310.6 L523.8 309.6 L519.6 305.5 L515.3 301.5 L511.1 297.5 L508.6 295.3 L501.9 316.4 L520.1 315.2 L524.9 310.6Z" fill="rgb(126, 115, 109)" stroke="rgb(126, 115, 109)" stroke-width="0.7" stroke-linejoin="round"/>
<path d="M541.2 326.6 L541.0 326.4 L536.8 322.0 L532.5 317.8 L528.1 313.7 L524.9 310.6 L520.1 315.2 L526.5 336.8 L541.2 326.6Z" fill="rgb(127, 116, 109)" stroke="rgb(127, 116, 109)" stroke-width="0.7" stroke-linejoin="round"/>
<path d="M577.4 392.2 L578.1 392.2 L577.1 388.8 L575.0 382.0 L572.8 376.1 L570.3 370.9 L567.7 366.0 L564.9 361.3 L564.2 360.1 L564.6 388.5 L577.4 392.2Z" fill="rgb(124, 113, 107)" stroke="rgb(124, 113, 107)" stroke-width="0.7" stroke-linejoin="round"/>
<path d="M566.7 428.4 L570.2 429.6 L583.8 426.8 L583.4 420.0 L582.4 412.1 L581.0 404.1 L579.2 396.6 L566.7 428.4Z" fill="rgb(132, 121, 114)" stroke="rgb(132, 121, 114)" stroke-width="0.7" stroke-linejoin="round"/>
<path d="M570.2 429.6 L577.0 456.8 L582.2 460.1 L582.2 460.0 L583.0 453.2 L583.6 445.3 L583.9 436.8 L583.9 428.2 L583.8 426.8 L570.2 429.6Z" fill="rgb(131, 120, 113)" stroke="rgb(131, 120, 113)" stroke-width="0.7" stroke-linejoin="round"/>
<path d="M548.1 510.0 L549.6 508.5 L553.0 505.3 L556.2 502.2 L559.3 499.1 L562.2 496.0 L564.9 492.9 L567.5 489.8 L569.9 486.7 L571.0 485.0 L568.8 484.3 L558.4 486.7 L548.1 510.0Z" fill="rgb(125, 114, 108)" stroke="rgb(125, 114, 108)" stroke-width="0.7" stroke-linejoin="round"/>
<path d="M538.3 505.5 L525.8 515.3 L529.7 528.6 L530.1 528.2 L534.2 524.1 L538.3 519.9 L542.3 515.8 L546.1 512.0 L546.4 511.7 L538.3 505.5Z" fill="rgb(138, 126, 119)" stroke="rgb(138, 126, 119)" stroke-width="0.7" stroke-linejoin="round"/>
<path d="M463.9 562.8 L438.4 568.5 L438.2 569.5 L438.6 574.8 L442.3 583.7 L448.4 581.2 L454.5 578.5 L460.0 576.0 L464.9 573.7 L466.7 572.7 L463.9 562.8Z" fill="rgb(134, 122, 115)" stroke="rgb(134, 122, 115)" stroke-width="0.7" stroke-linejoin="round"/>
<path d="M397.8 573.7 L409.0 590.9 L422.7 578.1 L398.0 573.2 L397.8 573.7Z" fill="rgb(140, 128, 121)" stroke="rgb(140, 128, 121)" stroke-width="0.7" stroke-linejoin="round"/>
<path d="M385.2 586.6 L369.3 571.5 L361.0 576.0 L360.9 576.5 L363.2 589.7 L366.7 590.1 L373.0 590.8 L379.2 591.3 L383.1 591.5 L385.2 586.6Z" fill="rgb(139, 127, 119)" stroke="rgb(139, 127, 119)" stroke-width="0.7" stroke-linejoin="round"/>
<path d="M353.5 569.9 L333.5 580.9 L333.2 583.3 L336.8 584.5 L342.0 586.0 L343.8 586.4 L360.9 576.5 L361.0 576.0 L353.5 569.9Z" fill="rgb(152, 139, 131)" stroke="rgb(152, 139, 131)" stroke-width="0.7" stroke-linejoin="round"/>
<path d="M309.4 570.9 L293.2 549.4 L290.9 552.7 L295.5 574.4 L297.1 574.8 L302.4 575.6 L306.1 576.1 L309.4 570.9Z" fill="rgb(156, 143, 134)" stroke="rgb(156, 143, 134)" stroke-width="0.7" stroke-linejoin="round"/>
<path d="M256.7 544.5 L254.9 554.5 L257.9 556.3 L263.0 559.2 L268.0 562.0 L272.8 564.6 L273.0 564.8 L274.8 562.6 L266.9 529.6 L266.7 529.7 L256.7 544.5Z" fill="rgb(166, 152, 143)" stroke="rgb(166, 152, 143)" stroke-width="0.7" stroke-linejoin="round"/>
<path d="M256.7 544.5 L266.7 529.7 L230.7 533.7 L229.3 537.5 L229.9 537.9 L256.7 544.5Z" fill="rgb(171, 157, 148)" stroke="rgb(171, 157, 148)" stroke-width="0.7" stroke-linejoin="round"/>
<path d="M199.5 499.9 L196.3 504.6 L198.5 507.2 L202.0 511.0 L205.7 515.1 L209.5 519.1 L230.3 511.2 L232.2 501.7 L199.5 499.9Z" fill="rgb(170, 156, 147)" stroke="rgb(170, 156, 147)" stroke-width="0.7" stroke-linejoin="round"/>
<path d="M189.0 480.8 L183.3 457.0 L171.7 469.4 L172.0 470.0 L174.4 474.3 L177.1 478.8 L179.9 483.2 L189.0 480.8Z" fill="rgb(147, 134, 126)" stroke="rgb(147, 134, 126)" stroke-width="0.7" stroke-linejoin="round"/>
<path d="M160.0 424.3 L160.0 425.0 L160.2 430.1 L160.6 435.2 L161.2 440.4 L162.0 445.3 L162.3 446.7 L179.6 447.9 L172.2 420.4 L160.0 424.3Z" fill="rgb(135, 123, 116)" stroke="rgb(135, 123, 116)" stroke-width="0.7" stroke-linejoin="round"/>
<path d="M177.5 377.6 L167.8 374.5 L167.5 375.0 L165.6 380.0 L164.0 385.0 L162.8 390.0 L161.8 395.0 L161.4 397.3 L180.4 402.8 L181.4 401.6 L177.5 377.6Z" fill="rgb(132, 121, 114)" stroke="rgb(132, 121, 114)" stroke-width="0.7" stroke-linejoin="round"/>
<path d="M228.5 338.8 L220.3 330.6 L198.0 332.2 L195.3 335.1 L190.7 340.0 L186.4 345.0 L186.3 345.2 L225.1 341.2 L228.5 338.8Z" fill="rgb(135, 123, 116)" stroke="rgb(135, 123, 116)" stroke-width="0.7" stroke-linejoin="round"/>
<path d="M220.3 330.6 L228.5 338.8 L240.2 340.4 L240.7 339.5 L235.4 310.2 L216.4 313.9 L215.9 314.3 L214.2 316.0 L220.3 330.6Z" fill="rgb(138, 126, 119)" stroke="rgb(138, 126, 119)" stroke-width="0.7" stroke-linejoin="round"/>
<path d="M269.9 279.3 L246.3 294.5 L252.5 299.1 L267.0 302.6 L269.9 279.3Z" fill="rgb(132, 121, 114)" stroke="rgb(132, 121, 114)" stroke-width="0.7" stroke-linejoin="round"/>
<path d="M271.3 276.2 L289.0 286.4 L293.5 265.2 L290.0 260.3 L284.0 262.9 L276.1 266.9 L269.2 270.9 L271.3 276.2Z" fill="rgb(125, 115, 108)" stroke="rgb(125, 115, 108)" stroke-width="0.7" stroke-linejoin="round"/>
<path d="M320.7 253.0 L317.7 253.4 L313.3 254.2 L313.3 269.2 L326.0 277.0 L331.6 260.9 L320.7 253.0Z" fill="rgb(132, 120, 113)" stroke="rgb(132, 120, 113)" stroke-width="0.7" stroke-linejoin="round"/>
<path d="M355.2 259.2 L360.4 262.8 L385.4 258.2 L385.2 248.7 L378.8 248.3 L372.9 248.0 L355.2 259.2Z" fill="rgb(128, 117, 110)" stroke="rgb(128, 117, 110)" stroke-width="0.7" stroke-linejoin="round"/>
<path d="M396.2 265.1 L406.2 267.6 L418.0 252.9 L416.6 252.6 L410.4 251.6 L407.0 251.1 L396.2 265.1Z" fill="rgb(129, 118, 111)" stroke="rgb(129, 118, 111)" stroke-width="0.7" stroke-linejoin="round"/>
<path d="M430.3 276.5 L430.6 288.7 L431.5 289.6 L432.0 289.4 L457.4 268.9 L458.8 266.1 L455.4 264.6 L449.0 262.1 L443.6 260.1 L430.3 276.5Z" fill="rgb(135, 123, 116)" stroke="rgb(135, 123, 116)" stroke-width="0.7" stroke-linejoin="round"/>
<path d="M457.4 268.9 L466.2 289.5 L474.3 284.1 L472.1 272.4 L469.8 271.2 L465.7 269.1 L461.0 267.0 L458.8 266.1 L457.4 268.9Z" fill="rgb(127, 116, 109)" stroke="rgb(127, 116, 109)" stroke-width="0.7" stroke-linejoin="round"/>
<path d="M501.9 316.4 L508.6 295.3 L506.9 293.8 L502.6 290.4 L498.3 287.4 L493.9 284.7 L493.2 284.3 L491.7 285.7 L484.4 310.8 L494.3 320.2 L501.9 316.4Z" fill="rgb(136, 124, 117)" stroke="rgb(136, 124, 117)" stroke-width="0.7" stroke-linejoin="round"/>
<path d="M526.5 336.8 L524.9 341.6 L525.0 343.7 L558.7 350.9 L555.7 346.0 L552.3 340.9 L548.7 335.8 L545.0 331.0 L541.2 326.6 L526.5 336.8Z" fill="rgb(123, 112, 106)" stroke="rgb(123, 112, 106)" stroke-width="0.7" stroke-linejoin="round"/>
<path d="M564.2 360.1 L562.0 356.4 L559.7 352.6 L545.4 369.5 L556.8 389.2 L564.6 388.5 L564.2 360.1Z" fill="rgb(131, 120, 113)" stroke="rgb(131, 120, 113)" stroke-width="0.7" stroke-linejoin="round"/>
<path d="M577.4 392.2 L553.5 420.9 L565.7 428.2 L566.7 428.4 L579.2 396.6 L579.2 396.2 L578.1 392.2 L577.4 392.2Z" fill="rgb(154, 141, 133)" stroke="rgb(154, 141, 133)" stroke-width="0.7" stroke-linejoin="round"/>
<path d="M577.0 456.8 L550.7 459.9 L550.1 460.2 L568.8 484.3 L571.0 485.0 L572.1 483.5 L574.2 480.0 L576.2 476.6 L578.0 473.2 L579.7 469.6 L581.1 465.3 L582.2 460.1 L577.0 456.8Z" fill="rgb(148, 135, 128)" stroke="rgb(148, 135, 128)" stroke-width="0.7" stroke-linejoin="round"/>
<path d="M530.2 482.6 L528.3 486.5 L538.3 505.5 L546.4 511.7 L548.1 510.0 L558.4 486.7 L530.2 482.6Z" fill="rgb(149, 136, 128)" stroke="rgb(149, 136, 128)" stroke-width="0.7" stroke-linejoin="round"/>
<path d="M507.5 531.2 L509.1 535.0 L515.2 541.1 L518.2 538.7 L522.1 535.5 L526.0 532.0 L529.7 528.6 L525.8 515.3 L512.9 521.0 L507.5 531.2Z" fill="rgb(156, 143, 135)" stroke="rgb(156, 143, 135)" stroke-width="0.7" stroke-linejoin="round"/>
<path d="M489.3 548.0 L470.0 537.7 L468.0 549.3 L469.2 553.8 L481.8 564.1 L482.0 564.0 L486.7 561.1 L489.6 559.2 L489.3 548.0Z" fill="rgb(144, 132, 124)" stroke="rgb(144, 132, 124)" stroke-width="0.7" stroke-linejoin="round"/>
<path d="M172.2 420.4 L179.6 447.9 L185.7 450.0 L194.6 447.0 L201.6 433.0 L179.8 414.5 L172.2 420.4Z" fill="rgb(168, 153, 144)" stroke="rgb(168, 153, 144)" stroke-width="0.7" stroke-linejoin="round"/>
<path d="M202.4 369.3 L197.4 366.7 L177.5 377.6 L181.4 401.6 L197.6 396.4 L207.6 376.8 L202.4 369.3Z" fill="rgb(170, 156, 147)" stroke="rgb(170, 156, 147)" stroke-width="0.7" stroke-linejoin="round"/>
<path d="M225.1 341.2 L186.3 345.2 L185.7 345.9 L197.4 366.7 L202.4 369.3 L225.1 341.2Z" fill="rgb(145, 132, 125)" stroke="rgb(145, 132, 125)" stroke-width="0.7" stroke-linejoin="round"/>
<path d="M235.4 310.2 L240.7 339.5 L247.8 333.3 L252.5 299.1 L246.3 294.5 L240.5 291.6 L240.4 291.6 L235.4 310.2Z" fill="rgb(140, 128, 121)" stroke="rgb(140, 128, 121)" stroke-width="0.7" stroke-linejoin="round"/>
<path d="M293.1 295.5 L292.8 293.7 L289.0 286.4 L271.3 276.2 L269.9 279.3 L267.0 302.6 L282.6 313.5 L293.1 295.5Z" fill="rgb(143, 131, 123)" stroke="rgb(143, 131, 123)" stroke-width="0.7" stroke-linejoin="round"/>
<path d="M311.0 269.6 L293.5 265.2 L289.0 286.4 L292.8 293.7 L311.0 269.6Z" fill="rgb(134, 123, 116)" stroke="rgb(134, 123, 116)" stroke-width="0.7" stroke-linejoin="round"/>
<path d="M331.6 260.9 L326.0 277.0 L335.1 293.0 L354.0 258.8 L347.5 249.2 L347.5 249.2 L341.0 250.0 L340.9 250.0 L331.6 260.9Z" fill="rgb(138, 126, 119)" stroke="rgb(138, 126, 119)" stroke-width="0.7" stroke-linejoin="round"/>
<path d="M360.4 262.8 L369.0 280.2 L382.2 282.3 L387.9 264.7 L385.4 258.2 L360.4 262.8Z" fill="rgb(144, 132, 124)" stroke="rgb(144, 132, 124)" stroke-width="0.7" stroke-linejoin="round"/>
<path d="M406.2 267.6 L416.0 284.9 L430.6 288.7 L430.3 276.5 L424.2 254.1 L422.8 253.8 L418.0 252.9 L406.2 267.6Z" fill="rgb(140, 128, 121)" stroke="rgb(140, 128, 121)" stroke-width="0.7" stroke-linejoin="round"/>
<path d="M466.2 289.5 L457.4 268.9 L432.0 289.4 L464.1 293.5 L466.2 289.5Z" fill="rgb(139, 127, 120)" stroke="rgb(139, 127, 120)" stroke-width="0.7" stroke-linejoin="round"/>
<path d="M491.7 285.7 L474.3 284.1 L466.2 289.5 L464.1 293.5 L471.1 309.6 L484.4 310.8 L491.7 285.7Z" fill="rgb(142, 130, 122)" stroke="rgb(142, 130, 122)" stroke-width="0.7" stroke-linejoin="round"/>
<path d="M524.9 341.6 L526.5 336.8 L520.1 315.2 L501.9 316.4 L494.3 320.2 L494.3 322.7 L524.9 341.6Z" fill="rgb(144, 132, 124)" stroke="rgb(144, 132, 124)" stroke-width="0.7" stroke-linejoin="round"/>
<path d="M525.0 343.7 L518.8 353.7 L523.0 374.5 L545.4 369.5 L559.7 352.6 L558.9 351.2 L558.7 350.9 L525.0 343.7Z" fill="rgb(139, 127, 120)" stroke="rgb(139, 127, 120)" stroke-width="0.7" stroke-linejoin="round"/>
<path d="M556.8 389.2 L537.9 408.6 L549.6 419.9 L553.5 420.9 L577.4 392.2 L564.6 388.5 L556.8 389.2Z" fill="rgb(171, 156, 147)" stroke="rgb(171, 156, 147)" stroke-width="0.7" stroke-linejoin="round"/>
<path d="M550.7 459.9 L577.0 456.8 L570.2 429.6 L566.7 428.4 L565.7 428.2 L550.7 459.9Z" fill="rgb(165, 151, 143)" stroke="rgb(165, 151, 143)" stroke-width="0.7" stroke-linejoin="round"/>
<path d="M568.8 484.3 L550.1 460.2 L533.6 461.4 L530.2 482.6 L558.4 486.7 L568.8 484.3Z" fill="rgb(173, 158, 149)" stroke="rgb(173, 158, 149)" stroke-width="0.7" stroke-linejoin="round"/>
<path d="M510.3 492.0 L512.9 521.0 L525.8 515.3 L538.3 505.5 L528.3 486.5 L510.3 492.0Z" fill="rgb(167, 153, 144)" stroke="rgb(167, 153, 144)" stroke-width="0.7" stroke-linejoin="round"/>
<path d="M469.4 535.2 L470.0 537.7 L489.3 548.0 L509.1 535.0 L507.5 531.2 L478.6 515.6 L469.4 535.2Z" fill="rgb(168, 154, 145)" stroke="rgb(168, 154, 145)" stroke-width="0.7" stroke-linejoin="round"/>
<path d="M463.9 562.8 L469.2 553.8 L468.0 549.3 L437.8 559.4 L438.4 568.5 L463.9 562.8Z" fill="rgb(159, 146, 137)" stroke="rgb(159, 146, 137)" stroke-width="0.7" stroke-linejoin="round"/>
<path d="M422.7 578.1 L438.6 574.8 L438.2 569.5 L397.5 564.7 L398.0 573.2 L422.7 578.1Z" fill="rgb(171, 156, 147)" stroke="rgb(171, 156, 147)" stroke-width="0.7" stroke-linejoin="round"/>
<path d="M385.2 586.6 L397.8 573.7 L398.0 573.2 L397.5 564.7 L396.8 562.7 L385.3 552.3 L380.4 554.8 L369.3 571.5 L385.2 586.6Z" fill="rgb(175, 160, 151)" stroke="rgb(175, 160, 151)" stroke-width="0.7" stroke-linejoin="round"/>
<path d="M340.0 544.5 L337.1 544.4 L325.6 559.3 L333.5 580.9 L353.5 569.9 L349.0 552.5 L340.0 544.5Z" fill="rgb(202, 185, 174)" stroke="rgb(202, 185, 174)" stroke-width="0.7" stroke-linejoin="round"/>
<path d="M293.2 549.4 L309.4 570.9 L325.5 559.3 L294.3 546.6 L293.2 549.4Z" fill="rgb(179, 163, 154)" stroke="rgb(179, 163, 154)" stroke-width="0.7" stroke-linejoin="round"/>
<path d="M274.8 562.6 L290.9 552.7 L293.2 549.4 L294.3 546.6 L293.7 540.0 L275.7 526.0 L270.5 526.4 L267.1 529.3 L266.9 529.6 L274.8 562.6Z" fill="rgb(203, 185, 175)" stroke="rgb(203, 185, 175)" stroke-width="0.7" stroke-linejoin="round"/>
<path d="M266.9 529.6 L267.1 529.3 L231.6 515.9 L230.7 533.7 L266.7 529.7 L266.9 529.6Z" fill="rgb(192, 176, 166)" stroke="rgb(192, 176, 166)" stroke-width="0.7" stroke-linejoin="round"/>
<path d="M242.1 484.9 L199.5 481.8 L198.2 482.9 L199.5 499.9 L232.2 501.7 L242.6 486.2 L242.1 484.9Z" fill="rgb(206, 188, 178)" stroke="rgb(206, 188, 178)" stroke-width="0.7" stroke-linejoin="round"/>
<path d="M205.4 460.8 L194.6 447.0 L185.7 450.0 L183.3 457.0 L189.0 480.8 L198.2 482.9 L199.5 481.8 L205.4 460.8Z" fill="rgb(177, 162, 153)" stroke="rgb(177, 162, 153)" stroke-width="0.7" stroke-linejoin="round"/>
<path d="M550.7 459.9 L565.7 428.2 L553.5 420.9 L549.6 419.9 L531.9 459.0 L533.6 461.4 L550.1 460.2 L550.7 459.9Z" fill="rgb(196, 179, 169)" stroke="rgb(196, 179, 169)" stroke-width="0.7" stroke-linejoin="round"/>
<path d="M478.6 515.6 L507.5 531.2 L512.9 521.0 L510.3 492.0 L490.8 489.5 L477.4 510.4 L478.6 515.6Z" fill="rgb(193, 177, 166)" stroke="rgb(193, 177, 166)" stroke-width="0.7" stroke-linejoin="round"/>
<path d="M437.8 559.4 L468.0 549.3 L470.0 537.7 L469.4 535.2 L434.4 535.4 L431.0 539.5 L430.9 541.1 L437.8 559.4Z" fill="rgb(188, 172, 162)" stroke="rgb(188, 172, 162)" stroke-width="0.7" stroke-linejoin="round"/>
<path d="M396.8 562.7 L397.5 564.7 L438.2 569.5 L438.4 568.5 L437.8 559.4 L430.9 541.1 L396.8 562.7Z" fill="rgb(194, 178, 168)" stroke="rgb(194, 178, 168)" stroke-width="0.7" stroke-linejoin="round"/>
<path d="M369.3 571.5 L380.4 554.8 L349.0 552.5 L353.5 569.9 L361.0 576.0 L369.3 571.5Z" fill="rgb(195, 178, 168)" stroke="rgb(195, 178, 168)" stroke-width="0.7" stroke-linejoin="round"/>
<path d="M325.5 559.3 L325.6 559.3 L337.1 544.4 L320.9 523.8 L293.7 540.0 L294.3 546.6 L325.5 559.3Z" fill="rgb(214, 196, 184)" stroke="rgb(214, 196, 184)" stroke-width="0.7" stroke-linejoin="round"/>
<path d="M270.5 526.4 L248.1 488.6 L242.6 486.2 L232.2 501.7 L230.3 511.2 L231.6 515.9 L267.1 529.3 L270.5 526.4Z" fill="rgb(228, 208, 196)" stroke="rgb(228, 208, 196)" stroke-width="0.7" stroke-linejoin="round"/>
<path d="M240.7 465.4 L205.4 460.8 L199.5 481.8 L242.1 484.9 L240.7 465.4Z" fill="rgb(225, 206, 194)" stroke="rgb(225, 206, 194)" stroke-width="0.7" stroke-linejoin="round"/>
<path d="M197.6 396.4 L181.4 401.6 L180.4 402.8 L179.8 414.5 L201.6 433.0 L221.1 423.2 L197.6 396.4Z" fill="rgb(194, 177, 167)" stroke="rgb(194, 177, 167)" stroke-width="0.7" stroke-linejoin="round"/>
<path d="M229.8 382.2 L253.7 369.1 L240.2 340.4 L228.5 338.8 L225.1 341.2 L202.4 369.3 L207.6 376.8 L229.8 382.2Z" fill="rgb(184, 168, 158)" stroke="rgb(184, 168, 158)" stroke-width="0.7" stroke-linejoin="round"/>
<path d="M283.0 317.3 L282.6 313.5 L267.0 302.6 L252.5 299.1 L247.8 333.3 L283.0 317.3Z" fill="rgb(152, 139, 131)" stroke="rgb(152, 139, 131)" stroke-width="0.7" stroke-linejoin="round"/>
<path d="M335.6 295.5 L335.1 293.0 L326.0 277.0 L313.3 269.2 L311.0 269.6 L292.8 293.7 L293.1 295.5 L335.6 295.5Z" fill="rgb(146, 134, 126)" stroke="rgb(146, 134, 126)" stroke-width="0.7" stroke-linejoin="round"/>
<path d="M355.2 259.2 L354.0 258.8 L335.1 293.0 L335.6 295.5 L336.4 296.6 L336.6 296.7 L369.0 280.2 L360.4 262.8 L355.2 259.2Z" fill="rgb(148, 135, 127)" stroke="rgb(148, 135, 127)" stroke-width="0.7" stroke-linejoin="round"/>
<path d="M382.2 282.3 L388.0 293.0 L416.0 284.9 L406.2 267.6 L396.2 265.1 L387.9 264.7 L382.2 282.3Z" fill="rgb(153, 140, 132)" stroke="rgb(153, 140, 132)" stroke-width="0.7" stroke-linejoin="round"/>
<path d="M471.1 309.6 L464.1 293.5 L432.0 289.4 L431.5 289.6 L430.9 309.2 L456.3 321.1 L471.1 309.6Z" fill="rgb(171, 157, 147)" stroke="rgb(171, 157, 147)" stroke-width="0.7" stroke-linejoin="round"/>
<path d="M486.1 347.3 L518.8 353.7 L525.0 343.7 L524.9 341.6 L494.3 322.7 L486.1 347.3Z" fill="rgb(164, 150, 142)" stroke="rgb(164, 150, 142)" stroke-width="0.7" stroke-linejoin="round"/>
<path d="M545.4 369.5 L523.0 374.5 L516.6 386.8 L519.1 404.2 L537.9 408.6 L556.8 389.2 L545.4 369.5Z" fill="rgb(176, 161, 152)" stroke="rgb(176, 161, 152)" stroke-width="0.7" stroke-linejoin="round"/>
<path d="M441.9 499.0 L438.8 500.4 L434.4 535.4 L469.4 535.2 L478.6 515.6 L477.4 510.4 L441.9 499.0Z" fill="rgb(213, 195, 184)" stroke="rgb(213, 195, 184)" stroke-width="0.7" stroke-linejoin="round"/>
<path d="M385.3 552.3 L396.8 562.7 L430.9 541.1 L431.0 539.5 L386.3 519.5 L385.6 519.9 L385.3 552.3Z" fill="rgb(221, 203, 191)" stroke="rgb(221, 203, 191)" stroke-width="0.7" stroke-linejoin="round"/>
<path d="M370.2 518.1 L340.0 544.5 L349.0 552.5 L380.4 554.8 L385.3 552.3 L385.6 519.9 L370.2 518.1Z" fill="rgb(228, 208, 196)" stroke="rgb(228, 208, 196)" stroke-width="0.7" stroke-linejoin="round"/>
<path d="M293.7 540.0 L320.9 523.8 L320.8 514.9 L289.5 505.7 L275.7 526.0 L293.7 540.0Z" fill="rgb(221, 202, 191)" stroke="rgb(221, 202, 191)" stroke-width="0.7" stroke-linejoin="round"/>
<path d="M270.5 526.4 L275.7 526.0 L289.5 505.7 L285.7 485.6 L248.1 488.6 L270.5 526.4Z" fill="rgb(242, 221, 209)" stroke="rgb(242, 221, 209)" stroke-width="0.7" stroke-linejoin="round"/>
<path d="M251.3 437.2 L225.7 423.0 L221.1 423.2 L201.6 433.0 L194.6 447.0 L205.4 460.8 L240.7 465.4 L251.3 437.2Z" fill="rgb(228, 209, 197)" stroke="rgb(228, 209, 197)" stroke-width="0.7" stroke-linejoin="round"/>
<path d="M225.7 423.0 L229.8 382.2 L207.6 376.8 L197.6 396.4 L221.1 423.2 L225.7 423.0Z" fill="rgb(209, 191, 180)" stroke="rgb(209, 191, 180)" stroke-width="0.7" stroke-linejoin="round"/>
<path d="M288.6 324.6 L283.0 317.3 L247.8 333.3 L240.7 339.5 L240.2 340.4 L253.7 369.1 L259.3 371.3 L273.0 362.5 L288.6 324.6Z" fill="rgb(179, 164, 154)" stroke="rgb(179, 164, 154)" stroke-width="0.7" stroke-linejoin="round"/>
<path d="M288.6 324.6 L302.2 329.6 L336.4 296.6 L335.6 295.5 L293.1 295.5 L282.6 313.5 L283.0 317.3 L288.6 324.6Z" fill="rgb(165, 151, 142)" stroke="rgb(165, 151, 142)" stroke-width="0.7" stroke-linejoin="round"/>
<path d="M373.4 321.5 L386.7 300.6 L388.0 293.0 L382.2 282.3 L369.0 280.2 L336.6 296.7 L355.5 323.8 L358.5 325.6 L373.4 321.5Z" fill="rgb(177, 162, 153)" stroke="rgb(177, 162, 153)" stroke-width="0.7" stroke-linejoin="round"/>
<path d="M431.5 289.6 L430.6 288.7 L416.0 284.9 L388.0 293.0 L386.7 300.6 L423.7 316.9 L430.9 309.2 L431.5 289.6Z" fill="rgb(176, 161, 151)" stroke="rgb(176, 161, 151)" stroke-width="0.7" stroke-linejoin="round"/>
<path d="M467.8 361.9 L486.1 347.3 L494.3 322.7 L494.3 320.2 L484.4 310.8 L471.1 309.6 L456.3 321.1 L460.8 353.8 L467.8 361.9Z" fill="rgb(188, 172, 162)" stroke="rgb(188, 172, 162)" stroke-width="0.7" stroke-linejoin="round"/>
<path d="M467.7 365.1 L516.6 386.8 L523.0 374.5 L518.8 353.7 L486.1 347.3 L467.8 361.9 L467.7 365.1Z" fill="rgb(190, 174, 164)" stroke="rgb(190, 174, 164)" stroke-width="0.7" stroke-linejoin="round"/>
<path d="M537.9 408.6 L519.1 404.2 L503.2 420.9 L517.0 450.0 L531.9 459.0 L549.6 419.9 L537.9 408.6Z" fill="rgb(218, 200, 188)" stroke="rgb(218, 200, 188)" stroke-width="0.7" stroke-linejoin="round"/>
<path d="M530.2 482.6 L533.6 461.4 L531.9 459.0 L517.0 450.0 L484.9 473.0 L490.8 489.5 L510.3 492.0 L528.3 486.5 L530.2 482.6Z" fill="rgb(207, 190, 179)" stroke="rgb(207, 190, 179)" stroke-width="0.7" stroke-linejoin="round"/>
<path d="M320.8 514.9 L326.8 504.9 L310.6 473.8 L288.4 482.2 L285.7 485.6 L289.5 505.7 L320.8 514.9Z" fill="rgb(242, 221, 208)" stroke="rgb(242, 221, 208)" stroke-width="0.7" stroke-linejoin="round"/>
<path d="M285.7 485.6 L288.4 482.2 L264.2 432.3 L251.3 437.2 L240.7 465.4 L242.1 484.9 L242.6 486.2 L248.1 488.6 L285.7 485.6Z" fill="rgb(246, 225, 212)" stroke="rgb(246, 225, 212)" stroke-width="0.7" stroke-linejoin="round"/>
<path d="M251.3 437.2 L264.2 432.3 L277.4 421.9 L279.9 413.7 L259.3 371.3 L253.7 369.1 L229.8 382.2 L225.7 423.0 L251.3 437.2Z" fill="rgb(229, 210, 198)" stroke="rgb(229, 210, 198)" stroke-width="0.7" stroke-linejoin="round"/>
<path d="M313.6 343.4 L302.2 329.6 L288.6 324.6 L273.0 362.5 L314.4 364.0 L313.6 343.4Z" fill="rgb(193, 177, 167)" stroke="rgb(193, 177, 167)" stroke-width="0.7" stroke-linejoin="round"/>
<path d="M336.6 296.7 L336.4 296.6 L302.2 329.6 L313.6 343.4 L355.5 323.8 L336.6 296.7Z" fill="rgb(184, 169, 159)" stroke="rgb(184, 169, 159)" stroke-width="0.7" stroke-linejoin="round"/>
<path d="M413.8 341.2 L423.7 316.9 L386.7 300.6 L373.4 321.5 L410.8 343.2 L413.8 341.2Z" fill="rgb(198, 181, 170)" stroke="rgb(198, 181, 170)" stroke-width="0.7" stroke-linejoin="round"/>
<path d="M456.3 321.1 L430.9 309.2 L423.7 316.9 L413.8 341.2 L460.8 353.8 L456.3 321.1Z" fill="rgb(207, 189, 178)" stroke="rgb(207, 189, 178)" stroke-width="0.7" stroke-linejoin="round"/>
<path d="M519.1 404.2 L516.6 386.8 L467.7 365.1 L457.9 384.2 L495.6 421.3 L503.2 420.9 L519.1 404.2Z" fill="rgb(222, 203, 191)" stroke="rgb(222, 203, 191)" stroke-width="0.7" stroke-linejoin="round"/>
<path d="M484.9 473.0 L517.0 450.0 L503.2 420.9 L495.6 421.3 L458.7 450.6 L459.6 453.1 L484.9 473.0Z" fill="rgb(230, 210, 198)" stroke="rgb(230, 210, 198)" stroke-width="0.7" stroke-linejoin="round"/>
<path d="M490.8 489.5 L484.9 473.0 L459.6 453.1 L441.9 499.0 L477.4 510.4 L490.8 489.5Z" fill="rgb(231, 211, 199)" stroke="rgb(231, 211, 199)" stroke-width="0.7" stroke-linejoin="round"/>
<path d="M431.0 539.5 L434.4 535.4 L438.8 500.4 L403.1 489.0 L386.3 519.5 L431.0 539.5Z" fill="rgb(238, 218, 205)" stroke="rgb(238, 218, 205)" stroke-width="0.7" stroke-linejoin="round"/>
<path d="M348.9 498.8 L326.8 504.9 L320.8 514.9 L320.9 523.8 L337.1 544.4 L340.0 544.5 L370.2 518.1 L348.9 498.8Z" fill="rgb(240, 219, 207)" stroke="rgb(240, 219, 207)" stroke-width="0.7" stroke-linejoin="round"/>
<path d="M277.4 421.9 L264.2 432.3 L288.4 482.2 L310.6 473.8 L320.9 454.2 L320.9 454.0 L277.4 421.9Z" fill="rgb(240, 220, 207)" stroke="rgb(240, 220, 207)" stroke-width="0.7" stroke-linejoin="round"/>
<path d="M314.4 364.0 L273.0 362.5 L259.3 371.3 L279.9 413.7 L329.5 386.3 L314.4 364.0Z" fill="rgb(218, 199, 188)" stroke="rgb(218, 199, 188)" stroke-width="0.7" stroke-linejoin="round"/>
<path d="M332.6 387.1 L358.3 353.7 L358.5 325.6 L355.5 323.8 L313.6 343.4 L314.4 364.0 L329.5 386.3 L332.6 387.1Z" fill="rgb(210, 192, 181)" stroke="rgb(210, 192, 181)" stroke-width="0.7" stroke-linejoin="round"/>
<path d="M373.4 321.5 L358.5 325.6 L358.3 353.7 L401.2 373.3 L402.5 372.4 L410.8 343.2 L373.4 321.5Z" fill="rgb(215, 197, 185)" stroke="rgb(215, 197, 185)" stroke-width="0.7" stroke-linejoin="round"/>
<path d="M413.8 341.2 L410.8 343.2 L402.5 372.4 L447.0 391.2 L457.9 384.2 L467.7 365.1 L467.8 361.9 L460.8 353.8 L413.8 341.2Z" fill="rgb(228, 208, 196)" stroke="rgb(228, 208, 196)" stroke-width="0.7" stroke-linejoin="round"/>
<path d="M495.6 421.3 L457.9 384.2 L447.0 391.2 L435.4 428.1 L444.0 442.0 L458.7 450.6 L495.6 421.3Z" fill="rgb(241, 220, 208)" stroke="rgb(241, 220, 208)" stroke-width="0.7" stroke-linejoin="round"/>
<path d="M438.8 500.4 L441.9 499.0 L459.6 453.1 L458.7 450.6 L444.0 442.0 L401.0 481.5 L403.1 489.0 L438.8 500.4Z" fill="rgb(244, 223, 210)" stroke="rgb(244, 223, 210)" stroke-width="0.7" stroke-linejoin="round"/>
<path d="M386.3 519.5 L403.1 489.0 L401.0 481.5 L382.6 463.1 L382.0 463.0 L354.1 477.5 L348.9 498.8 L370.2 518.1 L385.6 519.9 L386.3 519.5Z" fill="rgb(246, 225, 212)" stroke="rgb(246, 225, 212)" stroke-width="0.7" stroke-linejoin="round"/>
<path d="M320.9 454.2 L310.6 473.8 L326.8 504.9 L348.9 498.8 L354.1 477.5 L320.9 454.2Z" fill="rgb(243, 222, 209)" stroke="rgb(243, 222, 209)" stroke-width="0.7" stroke-linejoin="round"/>
<path d="M411.2 425.4 L435.4 428.1 L447.0 391.2 L402.5 372.4 L401.2 373.3 L388.9 395.8 L395.5 410.7 L411.2 425.4Z" fill="rgb(242, 221, 209)" stroke="rgb(242, 221, 209)" stroke-width="0.7" stroke-linejoin="round"/>
<path d="M444.0 442.0 L435.4 428.1 L411.2 425.4 L382.6 463.1 L401.0 481.5 L444.0 442.0Z" fill="rgb(246, 225, 212)" stroke="rgb(246, 225, 212)" stroke-width="0.7" stroke-linejoin="round"/>
<path d="M366.5 440.2 L346.2 427.9 L320.9 454.0 L320.9 454.2 L354.1 477.5 L382.0 463.0 L366.5 440.2Z" fill="rgb(243, 222, 210)" stroke="rgb(243, 222, 210)" stroke-width="0.7" stroke-linejoin="round"/>
<path d="M346.2 427.9 L344.5 400.0 L332.6 387.1 L329.5 386.3 L279.9 413.7 L277.4 421.9 L320.9 454.0 L346.2 427.9Z" fill="rgb(230, 211, 199)" stroke="rgb(230, 211, 199)" stroke-width="0.7" stroke-linejoin="round"/>
<path d="M332.6 387.1 L344.5 400.0 L388.9 395.8 L401.2 373.3 L358.3 353.7 L332.6 387.1Z" fill="rgb(230, 210, 198)" stroke="rgb(230, 210, 198)" stroke-width="0.7" stroke-linejoin="round"/>
<path d="M382.6 463.1 L411.2 425.4 L395.5 410.7 L366.5 440.2 L382.0 463.0 L382.6 463.1Z" fill="rgb(246, 225, 212)" stroke="rgb(246, 225, 212)" stroke-width="0.7" stroke-linejoin="round"/>
<path d="M395.5 410.7 L388.9 395.8 L344.5 400.0 L346.2 427.9 L366.5 440.2 L395.5 410.7Z" fill="rgb(237, 217, 204)" stroke="rgb(237, 217, 204)" stroke-width="0.7" stroke-linejoin="round"/></g>
<ellipse cx="427" cy="409" rx="264" ry="177" transform="rotate(-10.6 427 409)" fill="none" stroke="#ffff00" stroke-width="1.1"/>
<ellipse cx="427" cy="409" rx="264" ry="177" transform="rotate(-10.6 427 409)" fill="none" stroke="#ff2000" stroke-width="1.3" stroke-dasharray="2.5 12.9"/>
<line x1="168" y1="457" x2="686" y2="360" stroke="#ffa500" stroke-width="1.2" stroke-dasharray="5 4"/>
<line x1="393.5" y1="234.7" x2="459.7" y2="583" stroke="#ffa500" stroke-width="1.2" stroke-dasharray="5 4"/>
<circle cx="31.8" cy="191.0" r="1.6" fill="#ff6ec0"/>
<circle cx="57.5" cy="203.9" r="1.6" fill="#ff6ec0"/>
<circle cx="83.2" cy="216.8" r="1.6" fill="#ff6ec0"/>
<circle cx="109.0" cy="229.6" r="1.6" fill="#ff6ec0"/>
<circle cx="134.8" cy="242.5" r="1.6" fill="#ff6ec0"/>
<circle cx="160.5" cy="255.4" r="1.6" fill="#ff6ec0"/>
<circle cx="186.2" cy="268.2" r="1.6" fill="#ff6ec0"/>
<circle cx="212.0" cy="281.1" r="1.6" fill="#ff6ec0"/>
<circle cx="237.8" cy="294.0" r="1.6" fill="#ff6ec0"/>
<circle cx="263.5" cy="306.9" r="1.6" fill="#ff6ec0"/>
<circle cx="289.2" cy="319.8" r="1.6" fill="#ff6ec0"/>
<circle cx="315.0" cy="332.6" r="1.6" fill="#ff6ec0"/>
<circle cx="340.8" cy="345.5" r="1.6" fill="#ff6ec0"/>
<circle cx="366.5" cy="358.4" r="1.6" fill="#ff6ec0"/>
<circle cx="392.2" cy="371.2" r="1.6" fill="#ff6ec0"/>
<circle cx="418.0" cy="384.1" r="1.6" fill="#ff6ec0"/>
<circle cx="469.5" cy="409.9" r="1.6" fill="#ff6ec0"/>
<circle cx="495.2" cy="422.8" r="1.6" fill="#ff6ec0"/>
<circle cx="521.0" cy="435.6" r="1.6" fill="#ff6ec0"/>
<circle cx="546.8" cy="448.5" r="1.6" fill="#ff6ec0"/>
<circle cx="572.5" cy="461.4" r="1.6" fill="#ff6ec0"/>
<circle cx="598.2" cy="474.2" r="1.6" fill="#ff6ec0"/>
<circle cx="624.0" cy="487.1" r="1.6" fill="#ff6ec0"/>
<circle cx="649.8" cy="500.0" r="1.6" fill="#ff6ec0"/>
<circle cx="675.5" cy="512.9" r="1.6" fill="#ff6ec0"/>
<circle cx="701.2" cy="525.8" r="1.6" fill="#ff6ec0"/>
<circle cx="727.0" cy="538.6" r="1.6" fill="#ff6ec0"/>
<g stroke="#f4e8f0" stroke-width="1"><line x1="439" y1="397" x2="449" y2="397"/><line x1="444" y1="392" x2="444" y2="402"/><line x1="440.5" y1="393.5" x2="447.5" y2="400.5"/><line x1="447.5" y1="393.5" x2="440.5" y2="400.5"/></g>
<circle cx="444" cy="397" r="1.8" fill="#ff6ec0"/>
<text x="444.5" y="407" font-family="Liberation Serif" font-size="11" fill="#fffbe8">3</text>
<circle cx="427" cy="410" r="2.6" fill="none" stroke="#0000ff" stroke-width="1.6"/>
<g stroke="#4a4a4a" stroke-width="1.2" fill="#d8d0c8"><circle cx="372" cy="420.5" r="5"/><line x1="366" y1="420.5" x2="378" y2="420.5"/><line x1="372" y1="414.5" x2="372" y2="426.5"/></g>
<line x1="399" y1="202.5" x2="390" y2="272.5" stroke="#0000ff" stroke-width="3.8" stroke-linecap="round"/>
<text x="393" y="273.5" font-family="Liberation Serif" font-size="13.5" fill="#2828e8">S</text>
<line x1="351" y1="589.5" x2="345" y2="638.5" stroke="#ff0000" stroke-width="3.6" stroke-linecap="round"/>
<line x1="176.0" y1="386.0" x2="183.2" y2="389.6" stroke="#00ffff" stroke-width="3"/><line x1="171.4" y1="379.5" x2="168.0" y2="386.3" stroke="#00ffff" stroke-width="3.4"/><line x1="184.9" y1="386.2" x2="181.5" y2="393.0" stroke="#00ffff" stroke-width="3.4"/><circle cx="176.0" cy="386.0" r="2.2" fill="#00ff30"/><text x="177" y="401" font-family="Liberation Serif" font-size="11" fill="#fff">1</text>
<line x1="178.0" y1="487.0" x2="185.1" y2="490.6" stroke="#00ffff" stroke-width="3"/><line x1="173.5" y1="480.4" x2="170.0" y2="487.2" stroke="#00ffff" stroke-width="3.4"/><line x1="186.9" y1="487.2" x2="183.4" y2="494.0" stroke="#00ffff" stroke-width="3.4"/><circle cx="178.0" cy="487.0" r="2.2" fill="#00ff30"/><text x="175" y="497" font-family="Liberation Serif" font-size="11" fill="#fff">2</text>
<line x1="531.0" y1="566.0" x2="538.2" y2="569.6" stroke="#00ffff" stroke-width="3"/><line x1="526.4" y1="559.5" x2="523.0" y2="566.3" stroke="#00ffff" stroke-width="3.4"/><line x1="539.9" y1="566.2" x2="536.5" y2="573.0" stroke="#00ffff" stroke-width="3.4"/><circle cx="531.0" cy="566.0" r="2.2" fill="#00ff30"/><text x="532" y="577" font-family="Liberation Serif" font-size="11" fill="#fff">1</text>
<line x1="389.0" y1="594.0" x2="396.1" y2="597.6" stroke="#00ffff" stroke-width="3"/><line x1="384.5" y1="587.4" x2="381.0" y2="594.2" stroke="#00ffff" stroke-width="3.4"/><line x1="397.9" y1="594.2" x2="394.4" y2="601.0" stroke="#00ffff" stroke-width="3.4"/><circle cx="389.0" cy="594.0" r="2.2" fill="#00ff30"/><text x="389" y="604" font-family="Liberation Serif" font-size="11" fill="#fff">2</text>
<text x="15" y="75.5" font-family="Liberation Sans" font-weight="bold" font-size="14" fill="#fff">(59) Elpis &#160;2025 Aug 3 &#160; 163.7 km</text>
<text x="15" y="91" font-family="Liberation Sans" font-weight="bold" font-size="14" fill="#fff">Geocentric &#160;X &#160;-602.2 ±0.2 &#160;Y -2840.7 ±0.2 km</text>
<text x="366" y="95" font-family="Liberation Sans" font-weight="bold" font-size="22" fill="#fff">N</text>
<text x="20" y="435" font-family="Liberation Sans" font-size="23.5" fill="#fff">E</text>
<rect x="578.5" y="157.5" width="51" height="15" fill="#fff"/><rect x="558.5" y="172" width="71" height="15" fill="#fff"/><rect x="574.5" y="186.5" width="55" height="15" fill="#fff"/>
<g font-family="Liberation Sans" font-size="10.9" fill="#483c9c" text-anchor="end" stroke="#483c9c" stroke-width="0.25"><text x="627" y="168.5">(59) Elpis</text><text x="627" y="183.5">DAMIT #6156</text><text x="627" y="197.5">Sky Plane</text></g>
<g stroke="#fff" stroke-width="1.3" fill="none"><path d="M714 271.5H724.5V570H714" stroke-dasharray="4 2.5"/></g>
<text transform="translate(708.5 405.5) rotate(90)" font-family="Liberation Serif" font-size="15" fill="#fff">100 mas</text>
<g stroke="#fff" stroke-width="1.3" fill="none"><path d="M134 751V761.5H606V751" stroke-dasharray="4 2.5"/></g>
<g stroke="#fff" stroke-width="1" fill="none"><path d="M178 731V741H566V731"/><path d="M174.5 752V741.5H570V752"/></g>
<g font-family="Liberation Serif" fill="#fff"><text x="373" y="739" font-size="11.5">(Volume) Mean dia = 147 km</text><text x="240" y="752" font-size="11.5">(Surface) Mean dia = 150 km</text><text x="19" y="773" font-size="9.6">Occult 4.2025.8.17</text><text x="123" y="773" font-size="10">Phase offset 0°</text><text x="355" y="775" font-size="12.5" font-style="italic">180 km</text><text x="620" y="775" font-size="13">Plot width</text><text x="38" y="743" font-size="15.2">Disappear</text><text x="38" y="757" font-size="15.2">Reappear</text></g>
<circle cx="26.5" cy="737.5" r="5" fill="#ff0000"/><circle cx="26.5" cy="751.5" r="5" fill="#1e8c1e"/>
</svg>
<svg class="a" style="left:732px;top:63px;" width="10" height="8"><path d="M1 6.5L5 2.5L9 6.5" fill="none" stroke="#606060" stroke-width="1.6"/></svg>
<div class="box" style="left:731px;top:436px;width:10px;height:17px;background:#cdcdcd;"></div>
<div class="box" style="left:8px;top:778px;width:721px;height:13px;background:#f0f0f0;"></div>
<svg class="a" style="left:13px;top:781px;" width="8" height="10"><path d="M6.5 1L2.5 5L6.5 9" fill="none" stroke="#606060" stroke-width="1.6"/></svg>
<svg class="a" style="left:718px;top:781px;" width="8" height="10"><path d="M1.5 1L5.5 5L1.5 9" fill="none" stroke="#606060" stroke-width="1.6"/></svg>
<div class="box" style="left:353px;top:780px;width:17px;height:10px;background:#cdcdcd;"></div><!-- right panel -->
<div class="box" style="left:751px;top:63px;width:343px;height:714px;border:1px solid #dcdcdc;border-bottom:none;"></div>
<div class="box" style="left:757px;top:58px;width:58px;height:12px;background:#f0f0f0;"></div>
<div class="t" style="left:759px;top:60.00px;font-size:10.4px;color:#000;">Find best fit</div>
<div class="box" style="left:759px;top:76px;width:33px;height:32px;background:#c0c0c0;border:1px solid;border-color:#fff #404040 #404040 #fff;box-shadow:inset -1px -1px 0 #808080, inset 1px 1px 0 #dfdfdf;"></div>
<svg class="a" style="left:762px;top:80px;" width="28" height="25"><g fill="#222"><circle cx="3" cy="5" r="0.9"/><circle cx="3" cy="9" r="0.9"/><circle cx="3" cy="13" r="0.9"/><circle cx="3" cy="17" r="0.9"/><circle cx="3" cy="21" r="0.9"/><circle cx="7" cy="21" r="0.9"/><circle cx="11" cy="21" r="0.9"/><circle cx="15" cy="21" r="0.9"/><circle cx="19" cy="21" r="0.9"/><circle cx="23" cy="21" r="0.9"/></g><path d="M7 17L12 12L16 16L22 10" fill="none" stroke="#111" stroke-width="1.2"/><g fill="#111"><circle cx="7" cy="17" r="1.3"/><circle cx="12" cy="12" r="1.3"/><circle cx="16" cy="16" r="1.3"/><circle cx="22" cy="10" r="1.3"/></g></svg>
<div class="t" style="right:284px;top:74.64px;font-size:10.7px;color:#000;">Center X</div>
<div class="t" style="right:284px;top:96.44px;font-size:10.7px;color:#000;">Center Y</div>
<div class="t" style="right:284px;top:123.44px;font-size:10.7px;color:#000;">Major axis (km)</div>
<div class="t" style="right:284px;top:145.44px;font-size:10.7px;color:#000;">Minor axis (km)</div>
<div class="t" style="right:284px;top:166.94px;font-size:10.7px;color:#000;">Orientation</div>
<div class="box" style="left:859px;top:69px;width:58px;height:20px;background:#fff;border:1px solid #abadb3;"></div>
<div class="box" style="left:901px;top:70px;width:15px;height:9px;background:#f0f0f0;border:1px solid #d8d8d8;"></div>
<div class="box" style="left:901px;top:79px;width:15px;height:9px;background:#f0f0f0;border:1px solid #d8d8d8;"></div>
<svg class="a" style="left:905px;top:72px;" width="8" height="14"><path d="M0.5 4.5L3.5 1L6.5 4.5Z M0.5 9L3.5 12.5L6.5 9Z" fill="#222"/></svg>
<div class="t" style="left:861px;top:73.02px;font-size:11.2px;color:#000;">27.8</div>
<div class="box" style="left:859px;top:91px;width:58px;height:20px;background:#fff;border:1px solid #abadb3;"></div>
<div class="box" style="left:901px;top:92px;width:15px;height:9px;background:#f0f0f0;border:1px solid #d8d8d8;"></div>
<div class="box" style="left:901px;top:101px;width:15px;height:9px;background:#f0f0f0;border:1px solid #d8d8d8;"></div>
<svg class="a" style="left:905px;top:94px;" width="8" height="14"><path d="M0.5 4.5L3.5 1L6.5 4.5Z M0.5 9L3.5 12.5L6.5 9Z" fill="#222"/></svg>
<div class="t" style="left:861px;top:95.02px;font-size:11.2px;color:#000;">29.9</div>
<div class="box" style="left:859px;top:118px;width:58px;height:20px;background:#fff;border:1px solid #abadb3;"></div>
<div class="box" style="left:901px;top:119px;width:15px;height:9px;background:#f0f0f0;border:1px solid #d8d8d8;"></div>
<div class="box" style="left:901px;top:128px;width:15px;height:9px;background:#f0f0f0;border:1px solid #d8d8d8;"></div>
<svg class="a" style="left:905px;top:121px;" width="8" height="14"><path d="M0.5 4.5L3.5 1L6.5 4.5Z M0.5 9L3.5 12.5L6.5 9Z" fill="#222"/></svg>
<div class="t" style="left:861px;top:122.02px;font-size:11.2px;color:#000;">198.5</div>
<div class="box" style="left:859px;top:141px;width:58px;height:20px;background:#fff;border:1px solid #abadb3;"></div>
<div class="box" style="left:901px;top:142px;width:15px;height:9px;background:#f0f0f0;border:1px solid #d8d8d8;"></div>
<div class="box" style="left:901px;top:151px;width:15px;height:9px;background:#f0f0f0;border:1px solid #d8d8d8;"></div>
<svg class="a" style="left:905px;top:144px;" width="8" height="14"><path d="M0.5 4.5L3.5 1L6.5 4.5Z M0.5 9L3.5 12.5L6.5 9Z" fill="#222"/></svg>
<div class="t" style="left:861px;top:145.02px;font-size:11.2px;color:#000;">135.0</div>
<div class="box" style="left:859px;top:163px;width:58px;height:20px;background:#fff;border:1px solid #abadb3;"></div>
<div class="box" style="left:901px;top:164px;width:15px;height:9px;background:#f0f0f0;border:1px solid #d8d8d8;"></div>
<div class="box" style="left:901px;top:173px;width:15px;height:9px;background:#f0f0f0;border:1px solid #d8d8d8;"></div>
<svg class="a" style="left:905px;top:166px;" width="8" height="14"><path d="M0.5 4.5L3.5 1L6.5 4.5Z M0.5 9L3.5 12.5L6.5 9Z" fill="#222"/></svg>
<div class="t" style="left:861px;top:167.02px;font-size:11.2px;color:#000;">100.9</div>
<div class="box" style="left:929px;top:72px;width:13px;height:13px;background:#fff;border:1px solid #333;"></div>
<svg class="a" style="left:929px;top:72px;" width="13" height="13"><path d="M2.5 6.5L5 9.5L10.5 3" fill="none" stroke="#333" stroke-width="1.3"/></svg>
<div class="t" style="left:948px;top:73.94px;font-size:10.7px;color:#000;">-0.5</div>
<div class="box" style="left:929px;top:94px;width:13px;height:13px;background:#fff;border:1px solid #333;"></div>
<svg class="a" style="left:929px;top:94px;" width="13" height="13"><path d="M2.5 6.5L5 9.5L10.5 3" fill="none" stroke="#333" stroke-width="1.3"/></svg>
<div class="t" style="left:948px;top:95.94px;font-size:10.7px;color:#000;">-0.1</div>
<div class="box" style="left:929px;top:121px;width:13px;height:13px;background:#fff;border:1px solid #333;"></div>
<div class="t" style="left:948px;top:123.44px;font-size:10.7px;color:#000;">0.0</div>
<div class="box" style="left:929px;top:143px;width:13px;height:13px;background:#fff;border:1px solid #333;"></div>
<div class="t" style="left:948px;top:145.44px;font-size:10.7px;color:#000;">0.0</div>
<div class="box" style="left:929px;top:165px;width:13px;height:13px;background:#fff;border:1px solid #333;"></div>
<svg class="a" style="left:929px;top:165px;" width="13" height="13"><path d="M2.5 6.5L5 9.5L10.5 3" fill="none" stroke="#333" stroke-width="1.3"/></svg>
<div class="t" style="left:948px;top:166.94px;font-size:10.7px;color:#000;">-0.2</div>
<div class="box" style="left:927px;top:183px;width:18px;height:6px;border:1px solid #c8c8c8;"></div>
<div class="box" style="left:929px;top:185px;width:14px;height:2px;background:#e00000;"></div>
<div class="t" style="right:112px;top:74.64px;font-size:10.7px;color:#000;">Mass X</div>
<div class="t" style="right:112px;top:96.44px;font-size:10.7px;color:#000;">Mass Y</div>
<div class="box" style="left:1031px;top:69px;width:58px;height:20px;background:#fff;border:1px solid #abadb3;"></div>
<div class="box" style="left:1073px;top:70px;width:15px;height:9px;background:#f0f0f0;border:1px solid #d8d8d8;"></div>
<div class="box" style="left:1073px;top:79px;width:15px;height:9px;background:#f0f0f0;border:1px solid #d8d8d8;"></div>
<svg class="a" style="left:1077px;top:72px;" width="8" height="14"><path d="M0.5 4.5L3.5 1L6.5 4.5Z M0.5 9L3.5 12.5L6.5 9Z" fill="#222"/></svg>
<div class="t" style="left:1033px;top:73.02px;font-size:11.2px;color:#000;">0.0</div>
<div class="box" style="left:1031px;top:91px;width:58px;height:20px;background:#fff;border:1px solid #abadb3;"></div>
<div class="box" style="left:1073px;top:92px;width:15px;height:9px;background:#f0f0f0;border:1px solid #d8d8d8;"></div>
<div class="box" style="left:1073px;top:101px;width:15px;height:9px;background:#f0f0f0;border:1px solid #d8d8d8;"></div>
<svg class="a" style="left:1077px;top:94px;" width="8" height="14"><path d="M0.5 4.5L3.5 1L6.5 4.5Z M0.5 9L3.5 12.5L6.5 9Z" fill="#222"/></svg>
<div class="t" style="left:1033px;top:95.02px;font-size:11.2px;color:#000;">0.0</div>
<div class="t" style="right:70px;top:112.47px;font-size:8.3px;color:#bcbcbc;">Shape model</div>
<div class="box" style="left:1074px;top:111px;width:13px;height:13px;background:#fff;border:1px solid #dcdcdc;"></div>
<div class="t" style="right:63px;top:126.44px;font-size:10.7px;color:#1e8a1e;">dia = 163.7 km</div>
<div class="t" style="right:49px;top:140.86px;font-size:10.8px;color:#2020e0;">a/b: 1.47, dMag: 0.42</div>
<div class="t" style="left:990px;top:171.03px;font-size:10.6px;color:#000;">Motion: 10.91 km/s</div>
<div class="box" style="left:763px;top:192px;width:13px;height:13px;background:#fff;border:1px solid #333;"></div>
<div class="t" style="left:781px;top:193.44px;font-size:10.7px;color:#000;">Circular</div>
<div class="box" style="left:829px;top:192px;width:13px;height:13px;background:#fff;border:1px solid #333;"></div>
<div class="t" style="left:848px;top:186.94px;font-size:10.7px;color:#000;">Use assumed</div>
<div class="t" style="left:848px;top:199.94px;font-size:10.7px;color:#000;">dia (163.7 km)</div>
<div class="box" style="left:931px;top:192px;width:13px;height:13px;background:#fff;border:1px solid #333;"></div>
<svg class="a" style="left:931px;top:192px;" width="13" height="13"><path d="M2.5 6.5L5 9.5L10.5 3" fill="none" stroke="#333" stroke-width="1.3"/></svg>
<div class="t" style="left:950px;top:193.44px;font-size:10.7px;color:#000;">Include Miss events</div>
<div class="box" style="left:761px;top:218px;width:323px;height:22px;border:1px solid;border-color:#a0a0a0 #fff #fff #a0a0a0;box-shadow:inset 1px 1px 0 #696969;"></div>
<div class="t" style="left:769px;top:223.10px;font-size:11.7px;color:#a8a8a8;font-weight:bold;">Double stars - show</div>
<div class="box" style="left:895px;top:222px;width:13px;height:13px;border:1px solid #c0c0c0;border-radius:50%;background:#fff;"></div>
<div class="box" style="left:898px;top:225px;width:7px;height:7px;border-radius:50%;background:#c0c0c0;"></div>
<div class="t" style="left:913px;top:226.13px;font-size:9.3px;color:#a8a8a8;">Both</div>
<div class="box" style="left:948px;top:222px;width:13px;height:13px;border:1px solid #c0c0c0;border-radius:50%;background:#fff;"></div>
<div class="t" style="left:965px;top:226.13px;font-size:9.3px;color:#a8a8a8;">Primary</div>
<div class="box" style="left:1011px;top:222px;width:13px;height:13px;border:1px solid #c0c0c0;border-radius:50%;background:#fff;"></div>
<div class="t" style="left:1030px;top:226.13px;font-size:9.3px;color:#a8a8a8;">Secondary</div>
<div class="t" style="left:762px;top:249.51px;font-size:11.8px;color:#006400;font-weight:bold;">Quality of the fit</div>
<div class="box" style="left:862px;top:245px;width:214px;height:21px;background:#fff;border:1px solid #7a7a7a;"></div>
<div class="t" style="left:865px;top:250.70px;font-size:10.4px;color:#000;">Astrometry only. No reliable size</div>
<svg class="a" style="left:1061px;top:251px;" width="12" height="8"><path d="M1 1.5L5.5 6L10 1.5" fill="none" stroke="#333" stroke-width="1.1"/></svg>
<div class="box" style="left:862px;top:269px;width:125px;height:17px;background:#add8e6;"></div>
<div class="box" style="left:862px;top:270px;width:13px;height:13px;background:#fff;border:1px solid #333;"></div>
<div class="t" style="left:882px;top:273.11px;font-size:10.5px;color:#1a1a40;font-style:italic;">Flag for future review</div>
<div class="box" style="left:753px;top:290px;width:338px;height:81px;background:#f0ffff;border:1px solid;border-color:#808080 #fff #fff #808080;box-shadow:inset 1px 1px 0 #404040;"></div>
<div class="t" style="left:760px;top:306.27px;font-size:11.5px;color:#900010;font-weight:bold;">P</div>
<div class="t" style="left:760px;top:318.27px;font-size:11.5px;color:#900010;font-weight:bold;">L</div>
<div class="t" style="left:760px;top:331.27px;font-size:11.5px;color:#900010;font-weight:bold;">O</div>
<div class="t" style="left:760px;top:344.27px;font-size:11.5px;color:#900010;font-weight:bold;">T</div>
<div class="t" style="left:780px;top:301.51px;font-size:11.8px;color:#600030;font-weight:bold;">Scale</div>
<div class="box" style="left:819px;top:298px;width:269px;height:19px;background:#fffacd;"></div>
<div class="box" style="left:824px;top:304px;width:257px;height:4px;background:#e7e7e7;border:1px solid #d6d6d6;"></div>
<svg class="a" style="left:824px;top:312px;" width="262" height="6"><g stroke="#9a9a9a" stroke-width="1"><line x1="0.5" y1="0" x2="0.5" y2="4"/><line x1="13.3" y1="0" x2="13.3" y2="4"/><line x1="26.1" y1="0" x2="26.1" y2="4"/><line x1="38.9" y1="0" x2="38.9" y2="4"/><line x1="51.7" y1="0" x2="51.7" y2="4"/><line x1="64.5" y1="0" x2="64.5" y2="4"/><line x1="77.3" y1="0" x2="77.3" y2="4"/><line x1="90.1" y1="0" x2="90.1" y2="4"/><line x1="102.9" y1="0" x2="102.9" y2="4"/><line x1="115.7" y1="0" x2="115.7" y2="4"/><line x1="128.5" y1="0" x2="128.5" y2="4"/><line x1="141.3" y1="0" x2="141.3" y2="4"/><line x1="154.1" y1="0" x2="154.1" y2="4"/><line x1="166.9" y1="0" x2="166.9" y2="4"/><line x1="179.7" y1="0" x2="179.7" y2="4"/><line x1="192.5" y1="0" x2="192.5" y2="4"/><line x1="205.3" y1="0" x2="205.3" y2="4"/><line x1="218.1" y1="0" x2="218.1" y2="4"/><line x1="230.9" y1="0" x2="230.9" y2="4"/><line x1="243.7" y1="0" x2="243.7" y2="4"/><line x1="256.5" y1="0" x2="256.5" y2="4"/></g></svg>
<svg class="a" style="left:948px;top:299px;" width="9" height="13"><path d="M0.5 0.5H8.5V8.5L4.5 12.5L0.5 8.5Z" fill="#0078d7"/></svg>
<div class="t" style="left:780px;top:328.51px;font-size:11.8px;color:#600030;font-weight:bold;">Size</div>
<div class="box" style="left:811px;top:323px;width:162px;height:28px;background:#f5fff0;border:1px solid;border-color:#a0a0a0 #fff #fff #a0a0a0;box-shadow:inset 1px 1px 0 #696969;"></div>
<div class="box" style="left:820px;top:328px;width:13px;height:13px;border:1px solid #333;border-radius:50%;background:#fff;"></div>
<div class="box" style="left:823px;top:331px;width:7px;height:7px;border-radius:50%;background:#222;"></div>
<div class="t" style="left:839px;top:330.36px;font-size:10.8px;color:#600030;font-weight:bold;">normal</div>
<div class="box" style="left:884px;top:328px;width:13px;height:13px;border:1px solid #333;border-radius:50%;background:#fff;"></div>
<div class="t" style="left:902px;top:329.77px;font-size:11.5px;color:#600030;font-weight:bold;">x 2</div>
<div class="box" style="left:928px;top:328px;width:13px;height:13px;border:1px solid #333;border-radius:50%;background:#fff;"></div>
<div class="t" style="left:947px;top:329.77px;font-size:11.5px;color:#600030;font-weight:bold;">x 5</div>
<div class="t" style="left:995px;top:329.43px;font-size:11.3px;color:#8000a0;font-weight:bold;">Form opacity</div>
<div class="t" style="left:781px;top:353.34px;font-size:12px;color:#600030;font-weight:bold;">Scroll range x1.25</div>
<div class="box" style="left:892px;top:352px;width:13px;height:13px;background:#fff;border:1px solid #333;"></div>
<div class="box" style="left:974px;top:346px;width:114px;height:21px;background:#fffacd;"></div>
<div class="box" style="left:980px;top:352px;width:103px;height:4px;background:#e7e7e7;border:1px solid #d6d6d6;"></div>
<svg class="a" style="left:983px;top:361px;" width="100" height="5"><g stroke="#9a9a9a" stroke-width="1"><line x1="0.5" y1="0" x2="0.5" y2="4"/><line x1="19.1" y1="0" x2="19.1" y2="4"/><line x1="37.7" y1="0" x2="37.7" y2="4"/><line x1="56.3" y1="0" x2="56.3" y2="4"/><line x1="74.9" y1="0" x2="74.9" y2="4"/><line x1="93.5" y1="0" x2="93.5" y2="4"/></g></svg>
<svg class="a" style="left:1073px;top:347px;" width="10" height="14"><path d="M0.5 0.5H9.5V9.5L5 13.5L0.5 9.5Z" fill="#0078d7"/></svg>
<div class="t" style="left:766px;top:384.11px;font-size:10.5px;color:#000;">RMS fit 0.3 ±0.3 km</div>
<div class="box" style="left:759px;top:402px;width:326px;height:380px;background:#fff;border:1px solid;border-color:#696969 #e3e3e3 #e3e3e3 #696969;box-shadow:inset 1px 1px 0 #a0a0a0;"></div>
<div class="box" style="left:765px;top:410px;width:66px;height:2px;background:#4b0082;"></div>
<div class="box" style="left:765px;top:422px;width:66px;height:2px;background:#ff0000;"></div>
<svg class="a" style="left:763px;top:433px;" width="70" height="5"><g fill="#ff69b4"><circle cx="3.0" cy="2.5" r="1.5"/><circle cx="18.2" cy="2.5" r="1.5"/><circle cx="33.4" cy="2.5" r="1.5"/><circle cx="48.6" cy="2.5" r="1.5"/><circle cx="63.8" cy="2.5" r="1.5"/></g></svg>
<div class="a" style="left:0;top:0;width:1084px;height:460px;overflow:hidden;">
<div class="t" style="left:854.5px;top:406.08px;font-size:13.6px;color:#000;font-family:'Liberation Mono',serif;">1&#160;&#160;&#160;&#160;W Hanna, near Yass, Nsw</div>
<div class="t" style="left:854.5px;top:418.08px;font-size:13.6px;color:#000;font-family:'Liberation Mono',serif;">2&#160;&#160;&#160;&#160;J Newman, near Flynn, A</div>
<div class="t" style="left:854.5px;top:430.08px;font-size:13.6px;color:#000;font-family:'Liberation Mono',serif;">3(P)&#160;Predicted</div>
</div>
<div class="box" style="left:1084px;top:402px;width:1px;height:380px;background:#e3e3e3;"></div>
<div class="box" style="left:1085px;top:402px;width:8px;height:380px;background:#f0f0f0;"></div>
<div class="box" style="left:666px;top:642px;width:450px;height:133px;background:#b0c4de;border:1px solid #808080;"></div>
<div class="t" style="left:669px;top:649.60px;font-size:11.7px;color:#2a3c6e;font-weight:bold;">DAMIT</div>
<div class="box" style="left:712px;top:645px;width:16px;height:19px;background:#f0f0f0;border:2px solid #cfcfcf;"></div>
<div class="box" style="left:715px;top:648px;width:10px;height:13px;background:#00ff00;"></div>
<div class="t" style="left:712px;width:16px;text-align:center;top:649px;font-size:10.8px;color:#000;">1</div>
<div class="box" style="left:730px;top:645px;width:16px;height:19px;background:#f0f0f0;border:2px solid #cfcfcf;"></div>
<div class="t" style="left:730px;width:16px;text-align:center;top:649px;font-size:10.8px;color:#a0a0a0;">2</div>
<div class="box" style="left:748px;top:645px;width:16px;height:19px;background:#f0f0f0;border:2px solid #cfcfcf;"></div>
<div class="t" style="left:748px;width:16px;text-align:center;top:649px;font-size:10.8px;color:#a0a0a0;">3</div>
<div class="box" style="left:766px;top:645px;width:16px;height:19px;background:#f0f0f0;border:2px solid #cfcfcf;"></div>
<div class="t" style="left:766px;width:16px;text-align:center;top:649px;font-size:10.8px;color:#a0a0a0;">4</div>
<div class="box" style="left:784px;top:645px;width:16px;height:19px;background:#f0f0f0;border:2px solid #cfcfcf;"></div>
<div class="t" style="left:784px;width:16px;text-align:center;top:649px;font-size:10.8px;color:#a0a0a0;">5</div>
<div class="box" style="left:802px;top:645px;width:16px;height:19px;background:#f0f0f0;border:2px solid #cfcfcf;"></div>
<div class="t" style="left:802px;width:16px;text-align:center;top:649px;font-size:10.8px;color:#a0a0a0;">6</div>
<div class="box" style="left:824px;top:645px;width:71px;height:19px;background:#f0f0f0;border:2px solid #cfcfcf;"></div>
<div class="box" style="left:826px;top:647px;width:67px;height:15px;background:#b0e6ec;"></div>
<div class="t" style="left:830px;top:650.03px;font-size:10.6px;color:#000;">Light curves</div>
<div class="t" style="left:901px;top:649.18px;font-size:11.6px;color:#2a3c6e;font-weight:bold;">ISAM</div>
<div class="box" style="left:937px;top:645px;width:16px;height:19px;background:#f0f0f0;border:2px solid #cfcfcf;"></div>
<div class="t" style="left:937px;width:16px;text-align:center;top:649px;font-size:10.8px;color:#a0a0a0;">1</div>
<div class="box" style="left:961px;top:645px;width:16px;height:19px;background:#f0f0f0;border:2px solid #cfcfcf;"></div>
<div class="t" style="left:961px;width:16px;text-align:center;top:649px;font-size:10.8px;color:#a0a0a0;">2</div>
<div class="box" style="left:985px;top:645px;width:16px;height:19px;background:#f0f0f0;border:2px solid #cfcfcf;"></div>
<div class="t" style="left:985px;width:16px;text-align:center;top:649px;font-size:10.8px;color:#a0a0a0;">3</div>
<div class="box" style="left:1009px;top:645px;width:16px;height:19px;background:#f0f0f0;border:2px solid #cfcfcf;"></div>
<div class="t" style="left:1009px;width:16px;text-align:center;top:649px;font-size:10.8px;color:#a0a0a0;">4</div>
<div class="box" style="left:1033px;top:645px;width:16px;height:19px;background:#f0f0f0;border:2px solid #cfcfcf;"></div>
<div class="t" style="left:1033px;width:16px;text-align:center;top:649px;font-size:10.8px;color:#a0a0a0;">5</div>
<div class="box" style="left:1057px;top:645px;width:16px;height:19px;background:#f0f0f0;border:2px solid #cfcfcf;"></div>
<div class="t" style="left:1057px;width:16px;text-align:center;top:649px;font-size:10.8px;color:#a0a0a0;">6</div>
<div class="box" style="left:1080px;top:645px;width:16px;height:19px;background:#f0f0f0;border:2px solid #cfcfcf;"></div>
<div class="box" style="left:1082px;top:647px;width:12px;height:15px;background:#2a2ab8;"></div>
<div class="t" style="left:1084px;top:649.00px;font-size:13px;color:#ffff00;font-weight:bold;">?</div>
<div class="box" style="left:1097px;top:645px;width:16px;height:19px;background:#f0f0f0;border:2px solid #cfcfcf;"></div>
<div class="box" style="left:1099px;top:647px;width:12px;height:15px;background:#dc143c;"></div>
<div class="t" style="left:1100.5px;top:649.34px;font-size:12px;color:#fff;">X</div>
<div class="t" style="left:674px;top:666.71px;font-size:10.5px;color:#2a3c6e;">Source</div>
<div class="t" style="left:733px;top:666.71px;font-size:10.5px;color:#2a3c6e;">ID</div>
<div class="t" style="left:767px;top:666.46px;font-size:10.8px;color:#2a3c6e;">Surf/Vol</div>
<div class="box" style="left:671px;top:679px;width:40px;height:19px;background:#f4f4f4;border:1px solid #7a7a7a;"></div>
<div class="t" style="left:674px;top:684.11px;font-size:10.5px;color:#000;">DAMIT</div>
<div class="box" style="left:712px;top:679px;width:53px;height:19px;background:#f0f0f0;border:1px solid #0078d7;"></div>
<div class="box" style="left:715px;top:682px;width:24px;height:13px;background:#0078d7;"></div>
<div class="t" style="left:715px;top:684.11px;font-size:10.5px;color:#fff;">6156</div>
<div class="box" style="left:767px;top:679px;width:39px;height:19px;background:#f0f0f0;border:1px solid #7a7a7a;"></div>
<div class="t" style="left:770px;top:684.11px;font-size:10.5px;color:#000;">1.019</div>
<div class="box" style="left:669px;top:699px;width:34px;height:21px;background:#ffff00;border:1px solid #6a6a30;"></div>
<div class="t" style="left:676px;top:703.84px;font-size:12px;color:#000;font-weight:bold;">Dia</div>
<div class="t" style="left:707px;top:702.97px;font-size:10.2px;color:#3c4478;font-style:italic;">Values in memory =&gt;</div>
<div class="box" style="left:808px;top:666px;width:302px;height:50px;background:#fff8dc;border:1px solid;border-color:#696969 #fff #fff #696969;"></div>
<div class="t" style="left:831px;top:668.37px;font-size:10.2px;color:#3a2a10;">Fit quality</div>
<div class="box" style="left:810px;top:680px;width:98px;height:20px;background:#fff;border:1px solid #7a7a7a;"></div>
<div class="t" style="left:813px;top:685.11px;font-size:10.5px;color:#000;">Model wrong</div>
<svg class="a" style="left:893px;top:686px;" width="12" height="8"><path d="M1 1.5L5.5 6L10 1.5" fill="none" stroke="#333" stroke-width="1.1"/></svg>
<div class="t" style="left:812px;top:702.11px;font-size:10.5px;color:#6a1a8a;">Model wrong</div>
<div class="t" style="left:909px;top:668.45px;font-size:10.1px;color:#3a2a10;">Ph Corrn</div>
<div class="box" style="left:911px;top:680px;width:39px;height:19px;background:#f0f0f0;border:1px solid #7a7a7a;"></div>
<div class="t" style="left:914px;top:685.11px;font-size:10.5px;color:#000;">0°</div>
<div class="t" style="left:913px;top:702.11px;font-size:10.5px;color:#6a1a8a;">0°</div>
<div class="t" style="left:960px;top:668.45px;font-size:10.1px;color:#3a2a10;">Minimum dia</div>
<div class="box" style="left:957px;top:680px;width:39px;height:20px;background:#ffb6c1;border:1px solid #7a7a7a;"></div>
<div class="box" style="left:997px;top:680px;width:31px;height:24px;background:#7cfc00;border:2px solid #cfcfcf;"></div>
<div class="t" style="left:1003px;top:687.86px;font-size:10.8px;color:#000;">Set</div>
<div class="t" style="left:960px;top:702.11px;font-size:10.5px;color:#6a1a8a;">0</div>
<div class="t" style="left:1036px;top:668.28px;font-size:10.3px;color:#3a2a10;">Maximum dia</div>
<div class="box" style="left:1035px;top:680px;width:39px;height:20px;background:#ffb6c1;border:1px solid #7a7a7a;"></div>
<div class="box" style="left:1075px;top:680px;width:31px;height:24px;background:#7cfc00;border:2px solid #cfcfcf;"></div>
<div class="t" style="left:1081px;top:687.86px;font-size:10.8px;color:#000;">Set</div>
<div class="t" style="left:1038px;top:701.11px;font-size:10.5px;color:#6a1a8a;">- - - -</div>
<div class="t" style="right:409px;top:723.20px;font-size:10.4px;color:#2a3c6e;">Version info</div>
<div class="box" style="left:734px;top:720px;width:270px;height:18px;background:#f0f0f0;border:1px solid #7a7a7a;"></div>
<div class="t" style="left:737px;top:723.78px;font-size:10.3px;color:#000;">2022-02-14, Q=1</div>
<div class="t" style="right:408px;top:747.70px;font-size:10.4px;color:#2a3c6e;">Image scale</div>
<div class="box" style="left:735px;top:744px;width:269px;height:22px;background:#fffacd;"></div>
<div class="box" style="left:741px;top:760px;width:256px;height:4px;background:#e7e7e7;border:1px solid #d6d6d6;"></div>
<svg class="a" style="left:744px;top:749px;" width="256" height="5"><g stroke="#9a9a9a" stroke-width="1"><line x1="0.5" y1="0" x2="0.5" y2="4"/><line x1="6.5" y1="0" x2="6.5" y2="4"/><line x1="12.4" y1="0" x2="12.4" y2="4"/><line x1="18.4" y1="0" x2="18.4" y2="4"/><line x1="24.3" y1="0" x2="24.3" y2="4"/><line x1="30.2" y1="0" x2="30.2" y2="4"/><line x1="36.2" y1="0" x2="36.2" y2="4"/><line x1="42.1" y1="0" x2="42.1" y2="4"/><line x1="48.1" y1="0" x2="48.1" y2="4"/><line x1="54.1" y1="0" x2="54.1" y2="4"/><line x1="60.0" y1="0" x2="60.0" y2="4"/><line x1="66.0" y1="0" x2="66.0" y2="4"/><line x1="71.9" y1="0" x2="71.9" y2="4"/><line x1="77.9" y1="0" x2="77.9" y2="4"/><line x1="83.8" y1="0" x2="83.8" y2="4"/><line x1="89.8" y1="0" x2="89.8" y2="4"/><line x1="95.7" y1="0" x2="95.7" y2="4"/><line x1="101.7" y1="0" x2="101.7" y2="4"/><line x1="107.6" y1="0" x2="107.6" y2="4"/><line x1="113.5" y1="0" x2="113.5" y2="4"/><line x1="119.5" y1="0" x2="119.5" y2="4"/><line x1="125.5" y1="0" x2="125.5" y2="4"/><line x1="131.4" y1="0" x2="131.4" y2="4"/><line x1="137.3" y1="0" x2="137.3" y2="4"/><line x1="143.3" y1="0" x2="143.3" y2="4"/><line x1="149.2" y1="0" x2="149.2" y2="4"/><line x1="155.2" y1="0" x2="155.2" y2="4"/><line x1="161.2" y1="0" x2="161.2" y2="4"/><line x1="167.1" y1="0" x2="167.1" y2="4"/><line x1="173.1" y1="0" x2="173.1" y2="4"/><line x1="179.0" y1="0" x2="179.0" y2="4"/><line x1="185.0" y1="0" x2="185.0" y2="4"/><line x1="190.9" y1="0" x2="190.9" y2="4"/><line x1="196.8" y1="0" x2="196.8" y2="4"/><line x1="202.8" y1="0" x2="202.8" y2="4"/><line x1="208.8" y1="0" x2="208.8" y2="4"/><line x1="214.7" y1="0" x2="214.7" y2="4"/><line x1="220.7" y1="0" x2="220.7" y2="4"/><line x1="226.6" y1="0" x2="226.6" y2="4"/><line x1="232.6" y1="0" x2="232.6" y2="4"/><line x1="238.5" y1="0" x2="238.5" y2="4"/><line x1="244.5" y1="0" x2="244.5" y2="4"/><line x1="250.4" y1="0" x2="250.4" y2="4"/></g></svg>
<svg class="a" style="left:866px;top:755px;" width="9" height="12"><path d="M0.5 11.5V4.5L4.5 0.5L8.5 4.5V11.5Z" fill="#0078d7"/></svg>
<div class="box" style="left:1013px;top:722px;width:98px;height:47px;background:#ffc0cb;border:3px solid #c8c8c8;"></div>
<div class="t" style="left:1013px;width:98px;text-align:center;top:732px;font-size:12.5px;font-weight:bold;color:#a01040;line-height:13px;">Save/update<br>model 6156</div>
</body></html>
